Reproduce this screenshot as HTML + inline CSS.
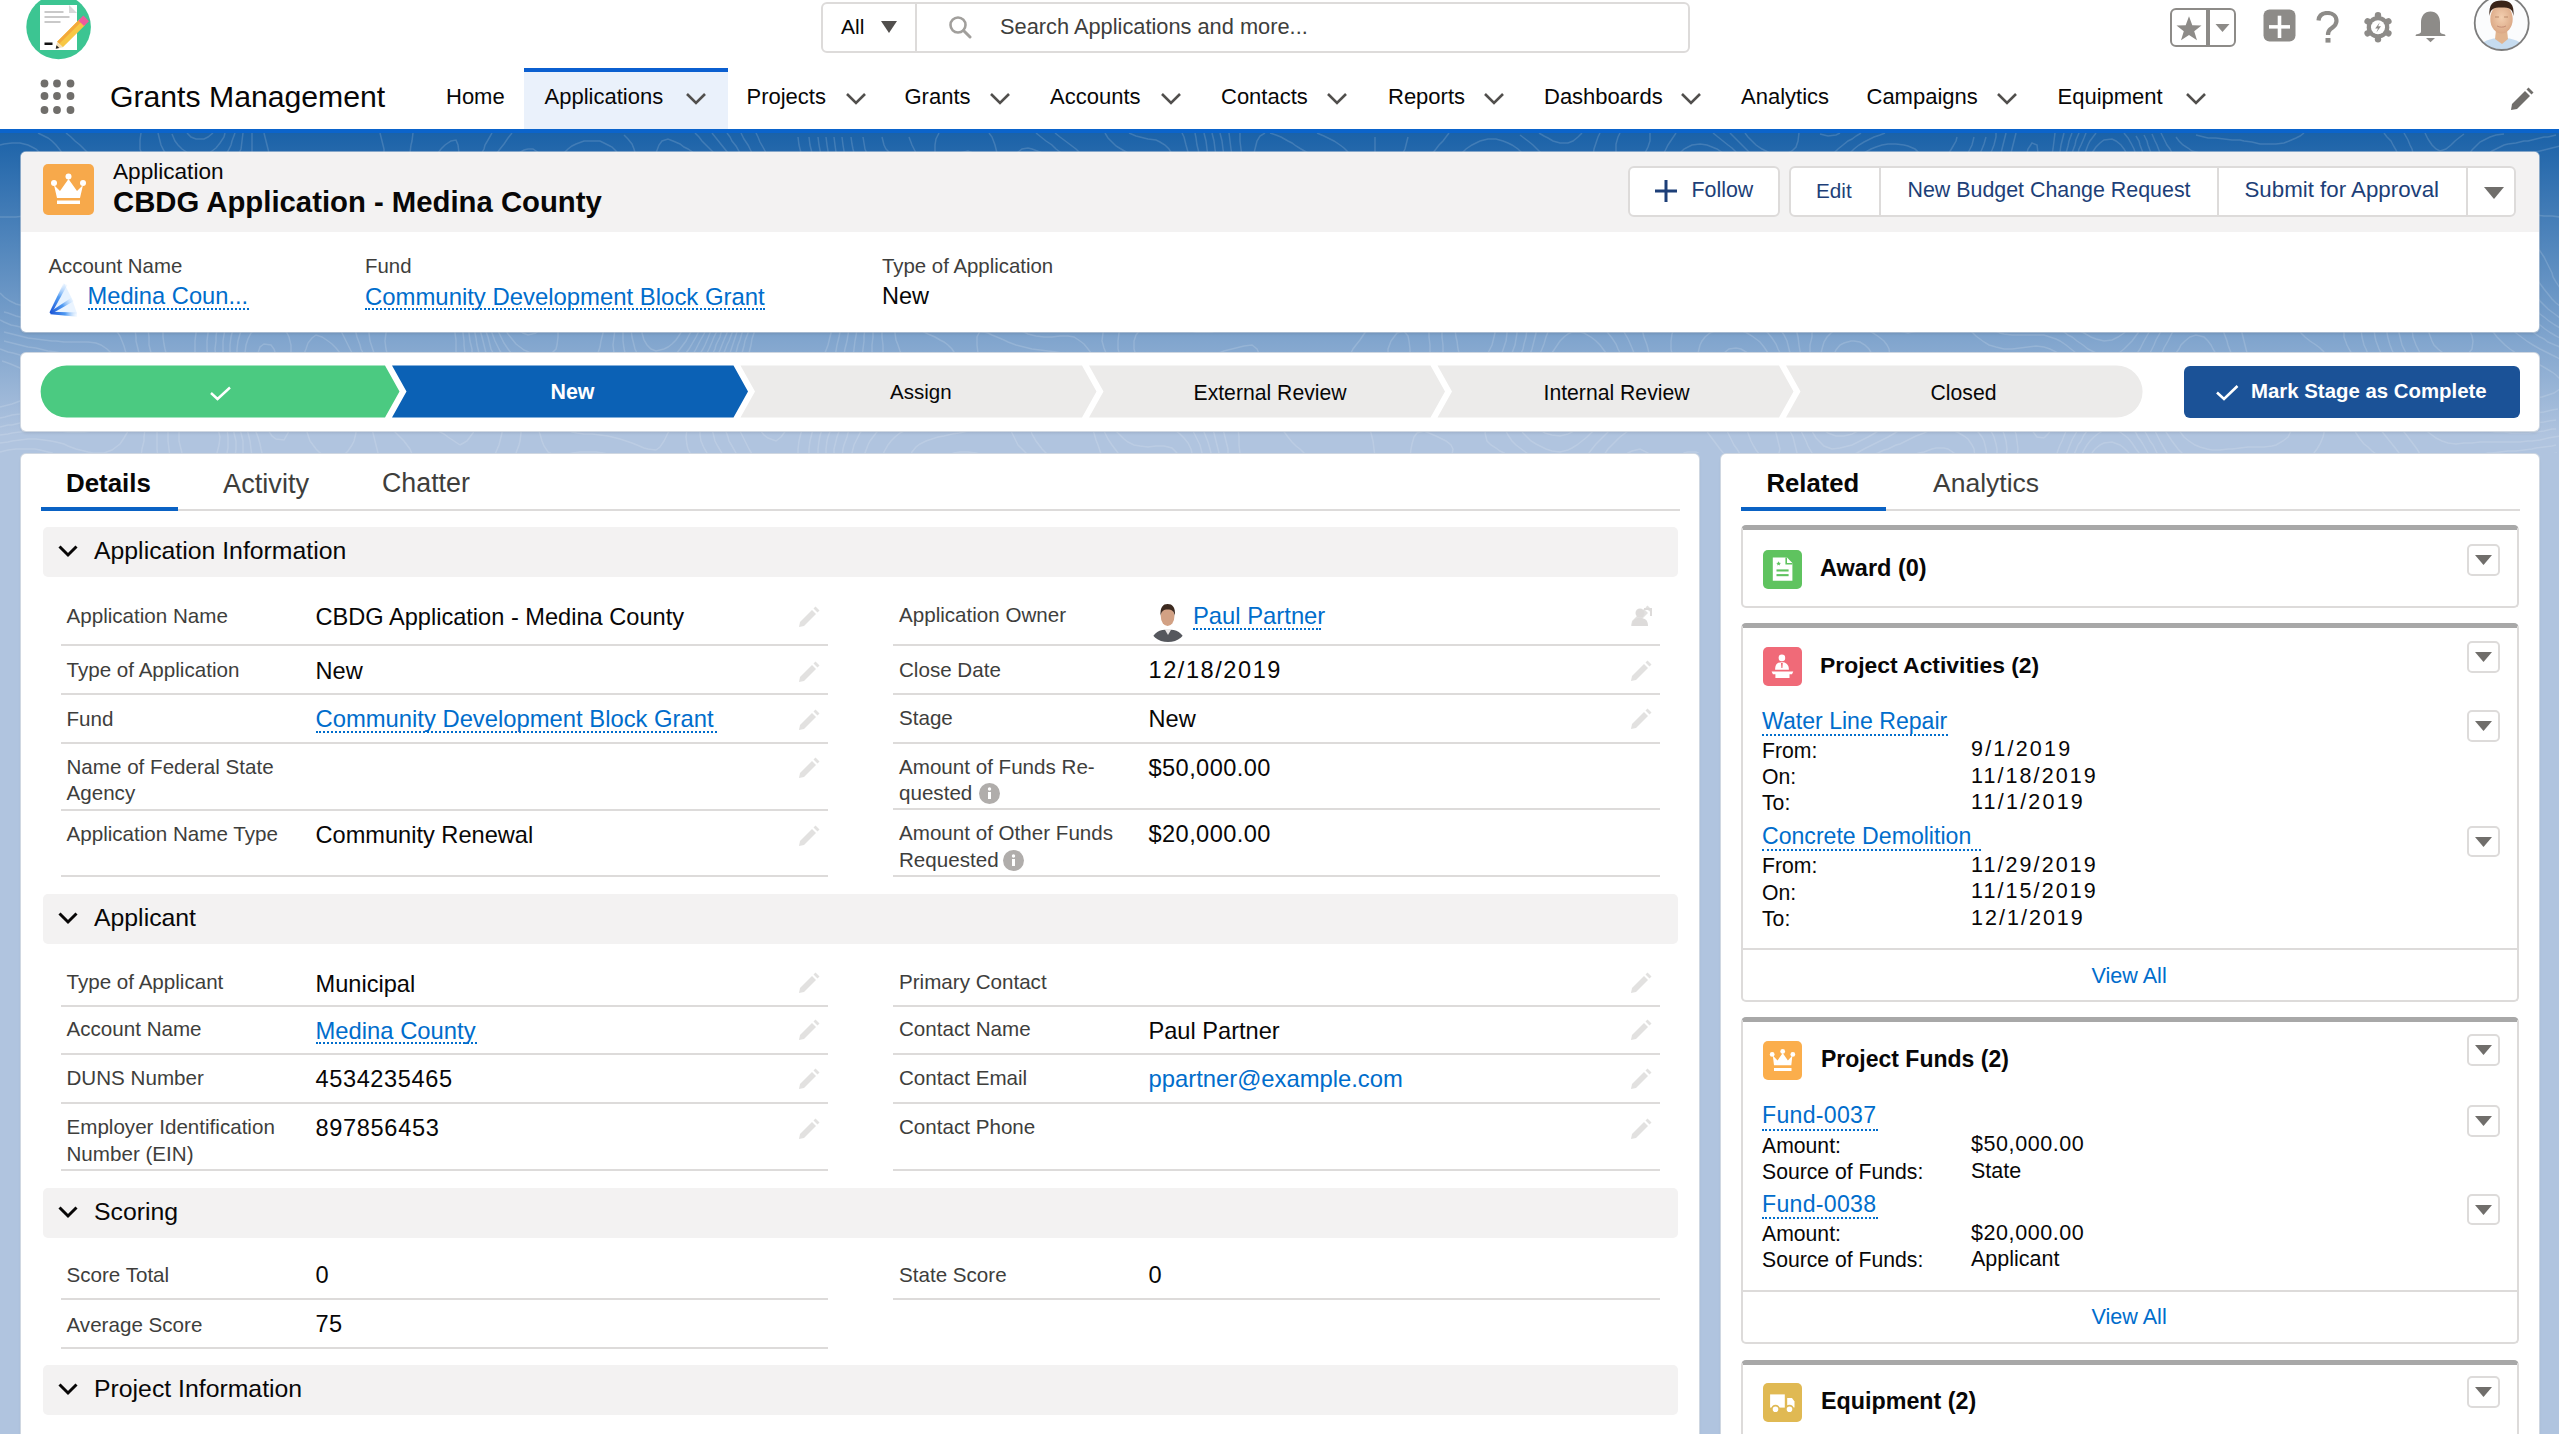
<!DOCTYPE html>
<html><head><meta charset="utf-8"><title>CBDG Application - Medina County</title>
<style>
html,body{margin:0;padding:0}
body{width:2559px;height:1434px;overflow:hidden;position:relative;background:#b0c4df;font-family:"Liberation Sans",sans-serif;}
.t{position:absolute;line-height:1;white-space:nowrap}
.r{position:absolute;display:block}
.lk{color:#006dcc}
.ul{position:absolute;height:0;border-bottom:2px dotted #006dcc}
</style></head><body>
<div class="r" style="left:0.0px;top:0.0px;width:2559.0px;height:128.5px;background:#fff"></div>
<div class="r" style="left:0.0px;top:128.5px;width:2559.0px;height:4.5px;background:#0b64cc"></div>
<div class="r" style="left:0.0px;top:133.0px;width:2559.0px;height:303.0px;background:linear-gradient(to bottom,#1b62a8 0%,#b0c4df 100%)"></div>
<svg class="r" style="left:0.0px;top:133.0px;" width="2559" height="320" viewBox="0 0 2559 320"><g fill="none" stroke="#fff" stroke-width="1.5" stroke-opacity="0.15"><polyline points="1881,104 1887,100 1890,96 1893,92 1896,84 1897,80 1898,72 1898,64 1897,56 1896,51 1892,44 1888,41 1880,40 1872,44 1868,48 1866,52 1864,56 1862,64 1861,72 1862,80 1863,88 1864,92 1868,99 1872,103 1876,104 1881,104"/><polyline points="2102,140 2108,137 2112,132 2114,128 2116,123 2118,116 2119,108 2120,101 2120,96 2120,88 2120,80 2120,73 2120,68 2118,60 2116,52 2115,48 2112,44 2104,42 2100,46 2097,52 2095,56 2092,63 2090,68 2088,75 2087,80 2084,88 2083,92 2082,100 2081,108 2081,116 2082,124 2084,129 2088,135 2092,138 2096,140 2102,140"/><polyline points="781,304 784,300 788,294 791,288 794,284 796,280 800,273 803,268 805,264 808,259 812,252 814,248 816,243 819,236 821,232 824,224 825,220 828,212 829,208 831,200 832,193 833,188 833,180 834,172 834,164 833,156 832,148 831,144 830,136 828,130 826,124 824,117 822,112 820,106 817,100 815,96 812,90 808,84 805,80 800,78 796,80 792,87 790,92 788,97 786,104 784,109 781,116 780,120 777,128 776,132 773,140 772,144 769,152 768,156 765,164 764,168 761,176 760,180 757,188 756,192 754,200 752,206 751,212 749,220 748,224 746,232 745,240 745,248 744,256 745,264 747,272 748,277 751,284 753,288 756,292 760,297 764,302 768,305 776,308 781,304"/><polyline points="442,252 447,248 450,244 452,240 455,232 456,224 456,220 456,212 456,207 455,200 453,192 452,188 448,180 446,176 441,172 436,170 428,170 423,172 416,175 412,177 407,180 400,184 396,187 392,191 388,196 386,200 385,208 386,216 388,224 390,228 392,232 396,239 400,243 404,247 408,250 412,252 420,255 428,256 436,255 442,252"/><polyline points="2457,224 2464,223 2469,220 2472,216 2473,208 2472,203 2469,196 2466,192 2463,188 2458,184 2452,180 2448,179 2440,179 2436,182 2432,186 2430,192 2429,200 2432,208 2434,212 2438,216 2443,220 2448,222 2456,224 2457,224"/><polyline points="756,0 758,4 760,9 764,16 766,20 768,25 771,32 773,36 776,44 777,48 779,56 780,64 780,68 780,76 780,82 779,88 778,96 776,104 775,108 773,116 772,121 770,128 768,134 766,140 764,147 763,152 760,160 759,164 756,172 755,176 752,184 751,188 749,196 748,200 745,208 744,213 742,220 740,228 739,232 737,240 736,248 735,252 734,260 734,268 734,276 736,284 737,288 739,296 741,300 744,306 747,312 749,316 752,321"/><polyline points="798,324 798,316 799,308 800,304 802,296 804,291 807,284 809,280 812,273 814,268 816,264 820,257 822,252 824,248 828,240 830,236 832,230 834,224 836,218 837,212 839,204 840,199 841,192 842,184 842,176 843,168 842,160 842,152 841,144 840,140 838,132 836,124 835,120 832,112 831,108 828,100 827,96 824,88 823,84 820,76 818,72 816,66 814,60 812,56 809,48 808,44 805,36 804,32 802,24 800,16 799,12 798,4"/><polyline points="2104,156 2112,152 2116,148 2118,144 2120,140 2124,132 2125,128 2126,120 2128,112 2128,106 2128,100 2129,92 2129,84 2128,76 2128,68 2128,64 2127,56 2126,48 2124,40 2123,36 2120,29 2116,24 2112,22 2104,22 2100,26 2096,31 2093,36 2092,40 2088,48 2087,52 2085,60 2083,64 2081,72 2080,76 2078,84 2076,90 2074,96 2073,104 2072,108 2071,116 2071,124 2072,131 2074,136 2076,141 2080,146 2084,150 2088,153 2095,156 2100,157 2104,156"/><polyline points="1882,120 1888,117 1892,114 1896,109 1899,104 1901,100 1904,92 1905,88 1907,80 1908,74 1909,68 1909,60 1909,52 1909,44 1908,40 1904,33 1900,29 1896,26 1888,24 1880,25 1872,28 1868,30 1864,34 1860,39 1857,44 1855,48 1853,56 1852,64 1852,68 1852,76 1852,80 1853,88 1855,96 1856,101 1859,108 1862,112 1865,116 1872,120 1876,121 1882,120"/><polyline points="1333,116 1336,109 1336,104 1336,100 1334,92 1332,87 1328,81 1324,76 1320,73 1316,70 1312,68 1304,65 1300,64 1296,64 1290,68 1288,72 1287,80 1288,88 1289,92 1292,100 1295,104 1299,108 1304,112 1308,114 1312,116 1320,118 1328,119 1333,116"/><polyline points="445,272 452,269 456,265 459,260 461,256 463,248 464,244 465,236 465,228 465,220 464,212 464,208 463,200 461,192 460,187 458,180 456,174 453,168 450,164 447,160 442,156 436,154 428,155 424,157 418,160 412,163 408,165 402,168 396,171 392,172 384,176 380,179 376,182 372,187 370,192 369,200 370,208 372,214 374,220 376,226 379,232 381,236 384,243 387,248 390,252 394,256 398,260 403,264 408,267 412,269 420,271 425,272 432,273 440,273 445,272"/><polyline points="2560,246 2556,242 2552,239 2547,236 2540,232 2536,230 2532,228 2524,224 2520,222 2516,220 2510,216 2505,212 2501,208 2497,204 2494,200 2490,196 2487,192 2483,188 2480,184 2476,180 2472,176 2468,172 2463,168 2456,164 2452,162 2446,160 2440,159 2435,160 2428,163 2424,166 2420,170 2416,176 2414,180 2412,188 2412,192 2412,196 2413,204 2416,212 2418,216 2420,220 2424,225 2428,229 2432,233 2437,236 2444,240 2448,241 2456,244 2460,245 2468,246 2476,248 2480,249 2488,252 2492,253 2498,256 2504,259 2508,261 2516,263 2520,264 2528,265 2536,265 2542,264 2548,262 2554,260 2560,256"/><polyline points="741,0 744,6 748,12 750,16 752,20 756,28 758,32 760,36 764,44 765,48 768,56 769,60 771,68 771,76 772,84 771,92 770,100 769,108 768,112 766,120 764,127 763,132 760,140 759,144 757,152 756,156 753,164 752,168 750,176 748,181 746,188 744,194 742,200 740,207 738,212 736,220 735,224 732,232 731,236 729,244 728,249 726,256 725,264 724,268 723,276 723,284 724,292 725,296 728,304 729,308 732,313 736,320 738,324"/><polyline points="809,324 809,316 810,308 812,300 813,296 815,288 817,284 820,277 822,272 824,268 828,261 831,256 833,252 836,245 838,240 840,235 842,228 844,222 845,216 847,208 848,202 849,196 850,188 850,180 851,172 851,164 850,156 850,148 849,140 848,136 846,128 844,120 843,116 840,108 839,104 836,96 835,92 832,84 831,80 828,72 827,68 824,60 823,56 820,48 819,44 816,36 815,32 813,24 812,20 810,12 809,4"/><polyline points="443,68 446,64 449,60 452,53 454,48 456,41 457,36 459,28 459,20 458,12 456,7 451,8 445,12 441,16 438,20 435,24 432,28 429,36 428,40 427,48 427,56 428,60 432,67 436,70 443,68"/><polyline points="2109,168 2116,164 2120,160 2123,156 2125,152 2128,146 2130,140 2132,133 2133,128 2134,120 2135,112 2136,104 2136,96 2136,88 2136,80 2136,72 2135,64 2135,56 2134,48 2133,40 2132,36 2130,28 2128,23 2124,16 2121,12 2116,8 2112,6 2104,7 2100,10 2096,14 2092,20 2090,24 2088,29 2086,36 2084,40 2082,48 2080,54 2078,60 2076,67 2075,72 2072,80 2071,84 2068,92 2067,96 2064,104 2063,108 2061,116 2060,124 2060,132 2062,140 2064,144 2068,150 2072,155 2076,159 2080,162 2084,165 2090,168 2096,170 2104,170 2109,168"/><polyline points="1884,132 1892,128 1896,125 1900,121 1903,116 1906,112 1908,107 1911,100 1912,95 1914,88 1916,80 1916,76 1918,68 1919,60 1920,53 1921,48 1921,40 1922,32 1920,24 1919,20 1915,16 1908,13 1904,12 1896,11 1888,11 1882,12 1876,14 1871,16 1864,20 1860,23 1856,27 1852,32 1850,36 1848,41 1846,48 1844,56 1844,63 1844,68 1844,74 1844,80 1845,88 1846,96 1848,104 1849,108 1852,115 1855,120 1858,124 1862,128 1868,131 1872,132 1880,133 1884,132"/><polyline points="1345,140 1349,136 1352,130 1353,124 1354,116 1353,108 1352,100 1351,96 1349,88 1348,84 1345,76 1343,72 1340,67 1336,61 1332,57 1328,53 1324,50 1320,47 1314,44 1308,41 1304,39 1298,36 1292,34 1286,32 1280,32 1276,33 1272,37 1269,44 1268,50 1268,56 1268,64 1268,68 1269,76 1270,84 1271,92 1272,97 1274,104 1276,111 1278,116 1280,120 1284,125 1288,128 1294,132 1300,134 1304,136 1312,139 1316,140 1324,142 1332,144 1340,143 1345,140"/><polyline points="1473,120 1477,116 1480,110 1483,104 1484,100 1487,92 1488,88 1489,80 1489,72 1487,68 1480,66 1476,69 1472,74 1469,80 1467,84 1466,92 1466,100 1466,108 1468,116 1471,120 1473,120"/><polyline points="460,312 467,308 470,304 473,300 476,292 477,288 477,280 477,272 477,264 476,256 476,252 475,244 474,236 473,228 472,220 472,216 470,208 469,200 468,194 467,188 465,180 464,176 461,168 460,164 456,156 454,152 452,148 448,143 444,139 436,136 428,139 424,141 420,144 414,148 408,152 404,154 399,156 392,158 386,160 380,162 372,164 368,166 364,168 360,172 356,178 354,184 354,192 356,200 357,204 360,212 361,216 364,222 366,228 368,232 372,240 374,244 376,249 380,256 382,260 385,264 388,269 392,273 396,277 400,280 407,284 412,286 416,288 424,291 428,293 435,296 440,299 444,301 448,304 454,308 460,312 460,312"/><polyline points="2560,226 2556,224 2548,220 2544,218 2540,216 2533,212 2528,209 2524,206 2520,203 2516,200 2511,196 2506,192 2501,188 2497,184 2493,180 2489,176 2485,172 2480,168 2476,164 2472,161 2468,158 2464,155 2460,152 2453,148 2448,146 2440,144 2432,145 2424,148 2420,150 2416,154 2412,157 2408,162 2405,168 2403,172 2400,180 2399,184 2399,192 2399,200 2400,204 2402,212 2404,216 2408,224 2411,228 2414,232 2417,236 2421,240 2426,244 2431,248 2436,251 2440,253 2446,256 2452,258 2457,260 2464,262 2468,264 2476,267 2480,268 2488,271 2492,273 2500,276 2504,277 2512,279 2520,280 2524,280 2530,280 2536,280 2544,279 2552,277 2558,276"/><polyline points="269,244 273,240 276,232 276,228 276,222 274,216 271,212 264,211 260,214 258,220 258,228 260,236 262,240 267,244 269,244"/><polyline points="0,274 8,272 12,271 20,268 24,266 28,264 34,260 38,256 38,248 35,244 30,240 24,237 20,235 13,232 8,230 2,228"/><polyline points="413,0 412,8 411,12 410,20 408,28 408,32 408,40 408,48 408,52 410,60 412,68 413,72 415,80 417,84 420,92 421,96 423,104 423,112 420,120 418,124 415,128 412,132 408,136 402,140 396,143 392,144 384,146 376,148 372,148 364,150 357,152 352,155 348,158 344,162 340,168 338,172 337,180 337,188 340,196 342,200 344,204 348,212 350,216 352,220 356,227 359,232 360,236 364,244 366,248 368,253 371,260 373,264 376,271 378,276 381,280 384,286 388,292 392,296 396,300 400,304 404,308 407,312 410,316 412,321"/><polyline points="494,324 496,319 499,312 500,308 502,300 502,292 501,284 500,280 497,272 495,268 492,262 490,256 488,252 485,244 484,240 482,232 480,225 479,220 477,212 476,205 475,200 473,192 472,185 471,180 469,172 468,168 465,160 464,156 461,148 459,144 456,136 455,132 452,124 451,120 449,112 449,104 451,96 452,92 454,84 456,80 459,72 461,68 464,60 466,56 468,50 471,44 472,40 476,32 478,28 480,23 484,16 485,12 488,7 492,0"/><polyline points="727,0 730,4 732,8 736,13 740,20 743,24 745,28 748,33 752,40 754,44 756,48 759,56 760,60 763,68 764,76 764,80 765,88 764,96 764,100 763,108 761,116 760,121 758,128 756,136 755,140 753,148 752,152 749,160 748,165 746,172 744,178 742,184 740,190 738,196 736,202 734,208 732,214 730,220 728,226 726,232 724,238 722,244 720,250 718,256 716,263 715,268 713,276 712,282 712,288 712,296 713,300 715,308 717,312 720,317 724,324"/><polyline points="818,324 818,316 819,308 820,303 822,296 824,290 826,284 828,280 832,273 834,268 837,264 840,257 843,252 845,248 848,240 849,236 852,228 853,224 854,216 855,208 856,203 857,196 857,188 858,180 858,172 859,164 859,156 858,148 858,140 856,132 855,128 853,120 852,115 850,108 848,104 845,96 844,92 841,84 840,80 837,72 836,68 833,60 831,56 829,48 827,44 825,36 824,32 821,24 820,17 819,12 818,4"/><polyline points="1265,0 1260,3 1257,8 1256,12 1254,20 1254,28 1254,36 1254,44 1255,52 1256,60 1257,64 1258,72 1259,80 1260,88 1261,92 1262,100 1263,108 1264,113 1266,120 1268,128 1269,132 1272,139 1276,144 1280,148 1284,150 1291,152 1296,153 1304,155 1309,156 1316,158 1323,160 1328,161 1336,163 1344,163 1350,160 1356,156 1359,152 1361,148 1364,141 1365,136 1366,128 1365,120 1365,112 1364,108 1363,100 1361,92 1360,88 1358,80 1356,74 1354,68 1352,62 1350,56 1348,52 1344,46 1340,41 1336,37 1332,34 1328,31 1323,28 1316,24 1312,22 1308,20 1301,16 1296,13 1292,10 1288,8 1281,4 1276,2 1270,0"/><polyline points="1885,0 1880,2 1874,4 1868,7 1864,9 1859,12 1854,16 1850,20 1846,24 1843,28 1840,35 1838,40 1837,48 1836,56 1836,64 1837,72 1837,80 1838,88 1839,96 1840,103 1841,108 1843,116 1845,120 1848,126 1852,132 1856,136 1860,138 1864,140 1872,143 1880,143 1888,142 1892,140 1898,136 1903,132 1906,128 1909,124 1912,118 1915,112 1916,108 1919,100 1920,96 1922,88 1924,80 1925,76 1927,68 1928,63 1930,56 1932,49 1934,44 1936,39 1940,32 1943,28 1946,24 1949,20 1952,15 1956,8 1957,4"/><polyline points="2096,0 2093,4 2090,8 2088,12 2085,20 2083,24 2080,32 2079,36 2077,44 2076,48 2074,56 2072,61 2070,68 2068,74 2066,80 2064,85 2061,92 2059,96 2056,104 2054,108 2052,112 2048,120 2047,124 2044,132 2045,140 2048,146 2052,151 2056,155 2060,159 2064,163 2068,166 2072,169 2076,172 2082,176 2088,179 2092,181 2100,182 2108,182 2112,180 2118,176 2123,172 2126,168 2129,164 2132,158 2135,152 2136,148 2139,140 2140,134 2141,128 2142,120 2143,112 2143,104 2143,96 2143,88 2143,80 2143,72 2142,64 2142,56 2141,48 2140,40 2140,36 2138,28 2136,22 2134,16 2132,12 2128,5 2124,0"/><polyline points="594,92 598,88 601,84 604,80 608,72 609,68 611,60 611,52 611,44 608,37 605,32 600,28 596,27 588,26 583,28 578,32 575,36 572,42 571,48 570,56 571,64 572,71 573,76 576,83 579,88 582,92 588,95 594,92"/><polyline points="1476,232 1482,228 1485,224 1488,220 1492,212 1493,208 1495,200 1495,192 1495,184 1494,176 1493,168 1492,162 1491,156 1491,148 1491,140 1492,132 1492,128 1494,120 1496,112 1497,108 1499,100 1500,96 1503,88 1504,84 1506,76 1507,68 1508,60 1506,52 1504,47 1500,43 1494,40 1488,40 1484,41 1477,44 1472,47 1468,51 1464,56 1461,60 1459,64 1456,72 1455,76 1453,84 1452,90 1451,96 1451,104 1450,112 1450,120 1450,128 1450,136 1451,144 1451,152 1452,160 1452,164 1453,172 1454,180 1454,188 1455,196 1456,204 1457,208 1458,216 1460,223 1463,228 1467,232 1472,233 1476,232"/><polyline points="2560,214 2555,212 2548,209 2544,206 2540,204 2534,200 2529,196 2524,192 2520,189 2516,185 2512,182 2508,179 2504,175 2500,172 2496,168 2491,164 2486,160 2482,156 2477,152 2472,148 2468,145 2464,141 2460,139 2456,136 2449,132 2444,130 2436,129 2428,131 2424,133 2418,136 2413,140 2408,144 2404,148 2401,152 2398,156 2395,160 2392,166 2390,172 2388,177 2387,184 2386,192 2387,200 2388,205 2390,212 2392,217 2395,224 2397,228 2400,232 2404,238 2408,243 2412,248 2416,252 2420,255 2424,258 2428,261 2433,264 2440,268 2444,270 2448,272 2456,275 2460,277 2468,279 2472,281 2480,283 2484,284 2492,287 2498,288 2504,289 2512,290 2520,291 2528,291 2536,290 2544,289 2549,288 2556,287"/><polyline points="277,272 280,268 284,260 285,256 287,248 288,243 289,236 290,228 291,220 291,212 289,204 287,200 284,196 279,192 272,190 264,191 260,192 255,196 251,200 248,206 246,212 245,220 246,228 247,236 248,240 251,248 253,252 256,258 260,264 263,268 268,272 272,274 277,272"/><polyline points="0,285 5,284 12,282 20,281 24,280 32,278 38,276 44,274 52,272 56,271 63,268 68,265 72,262 76,257 77,252 76,247 72,242 68,239 63,236 56,233 52,232 44,229 40,227 32,225 28,224 20,222 13,220 8,219 0,216"/><polyline points="1778,324 1780,316 1778,308 1776,300 1775,296 1772,289 1770,284 1768,276 1767,272 1765,264 1764,256 1763,252 1762,244 1760,238 1757,232 1755,228 1752,224 1748,220 1741,216 1736,215 1729,216 1724,220 1722,224 1721,232 1722,240 1724,247 1726,252 1728,256 1732,264 1734,268 1737,272 1740,279 1742,284 1744,289 1747,296 1748,300 1751,308 1753,312 1756,317 1760,322"/><polyline points="1957,324 1954,320 1948,316 1944,315 1936,315 1932,316 1924,319 1919,320 1912,322 1904,324"/><polyline points="380,0 382,8 384,16 384,20 386,28 388,36 389,40 390,48 392,53 394,60 396,67 398,72 400,80 401,84 403,92 404,97 405,104 404,110 402,116 400,120 396,124 390,128 384,130 376,131 370,132 364,132 356,133 348,136 344,138 340,140 336,144 332,148 328,153 324,159 320,164 318,168 315,172 312,176 304,180 296,179 288,177 280,176 272,176 264,178 258,180 252,184 248,187 244,192 242,196 240,201 238,208 237,216 237,224 238,232 240,240 241,244 244,251 246,256 248,261 252,268 254,272 256,277 260,284 262,288 265,292 268,297 272,303 276,306 284,307 288,300 289,296 290,288 292,280 292,276 294,268 295,260 296,254 297,248 299,240 300,235 302,228 304,221 306,216 308,210 312,205 316,202 322,204 328,208 332,211 336,215 340,220 343,224 346,228 348,232 352,238 355,244 357,248 360,256 361,260 364,268 365,272 368,280 369,284 371,292 372,296 374,304 376,312 377,316 379,324"/><polyline points="514,324 516,320 519,312 520,308 521,300 520,292 519,288 517,280 515,276 512,270 508,264 506,260 503,256 500,251 496,245 494,240 492,236 488,228 487,224 485,216 484,212 482,204 480,197 479,192 477,184 476,179 474,172 472,164 471,160 469,152 468,148 465,140 464,135 462,128 461,120 460,112 461,104 462,96 463,88 465,84 467,76 469,72 472,64 474,60 476,56 480,48 482,44 484,40 488,34 492,28 494,24 497,20 500,16 504,11 508,5 512,0"/><polyline points="712,0 716,5 720,10 724,15 728,20 731,24 734,28 737,32 740,36 744,43 747,48 749,52 752,59 754,64 756,71 757,76 758,84 758,92 758,100 757,108 756,114 755,120 753,128 752,133 750,140 748,148 747,152 745,160 743,164 741,172 740,176 737,184 736,188 733,196 732,200 729,208 727,212 724,220 723,224 720,232 718,236 716,242 714,248 712,252 709,260 707,264 704,272 703,276 701,284 700,290 700,296 700,302 701,308 704,315 707,320 709,324"/><polyline points="826,324 826,316 827,308 828,304 831,296 832,292 836,284 838,280 840,276 844,269 847,264 849,260 852,255 855,248 857,244 859,236 860,232 862,224 863,216 864,208 864,203 865,196 865,188 866,180 866,172 867,164 867,156 868,148 867,140 867,132 865,124 864,119 862,112 860,107 857,100 855,96 852,88 850,84 848,78 846,72 844,68 841,60 840,56 837,48 835,44 833,36 832,32 829,24 828,18 827,12 826,4"/><polyline points="1240,0 1240,8 1241,16 1242,24 1243,32 1244,40 1244,44 1246,52 1247,60 1248,64 1249,72 1251,80 1252,88 1252,92 1254,100 1254,108 1255,116 1256,123 1257,128 1258,136 1259,144 1260,152 1260,156 1262,164 1264,172 1265,176 1268,180 1276,181 1281,180 1288,178 1296,176 1300,176 1304,176 1312,177 1320,179 1324,181 1332,183 1340,184 1348,183 1354,180 1360,176 1364,172 1367,168 1370,164 1372,159 1375,152 1376,146 1377,140 1377,132 1376,124 1376,120 1374,112 1373,104 1372,100 1370,92 1368,84 1367,80 1366,72 1364,64 1363,60 1362,52 1360,46 1358,40 1356,33 1354,28 1352,24 1348,19 1344,15 1340,12 1334,8 1328,5 1324,3 1317,0"/><polyline points="1745,0 1748,4 1752,8 1756,12 1762,16 1768,19 1772,21 1780,22 1788,20 1792,18 1796,14 1798,8 1799,0"/><polyline points="1861,0 1856,3 1852,6 1848,8 1843,12 1838,16 1834,20 1831,24 1828,32 1827,36 1827,44 1827,52 1828,59 1829,64 1829,72 1830,80 1831,88 1832,96 1832,100 1834,108 1835,116 1836,120 1839,128 1841,132 1844,137 1848,141 1852,144 1859,148 1864,150 1872,152 1876,152 1884,152 1888,152 1896,149 1900,146 1904,144 1908,140 1912,135 1916,129 1919,124 1921,120 1924,112 1925,108 1928,100 1929,96 1931,88 1932,83 1934,76 1936,69 1938,64 1940,59 1943,52 1946,48 1949,44 1952,40 1956,35 1960,31 1964,26 1968,20 1970,16 1972,12 1974,4"/><polyline points="2086,0 2084,5 2081,12 2079,16 2077,24 2076,28 2074,36 2072,42 2070,48 2068,56 2067,60 2064,68 2063,72 2060,78 2057,84 2055,88 2052,94 2048,100 2045,104 2041,108 2037,112 2032,115 2028,117 2022,120 2016,123 2012,126 2008,130 2005,136 2005,144 2008,151 2012,156 2016,158 2021,160 2028,162 2036,163 2040,164 2048,167 2052,169 2057,172 2064,176 2068,179 2072,181 2076,184 2083,188 2088,191 2092,192 2100,195 2108,194 2114,192 2120,189 2124,185 2128,181 2132,176 2134,172 2136,168 2140,161 2142,156 2144,151 2146,144 2148,137 2149,132 2150,124 2151,116 2151,108 2151,100 2151,92 2151,84 2151,76 2150,68 2150,60 2149,52 2148,44 2148,40 2146,32 2144,24 2143,20 2140,12 2139,8 2136,3"/><polyline points="590,116 596,112 599,108 602,104 605,100 608,96 612,88 614,84 616,80 619,72 621,68 623,60 624,53 624,48 624,40 624,36 622,28 620,24 616,18 612,14 608,12 600,8 596,8 588,8 584,8 576,11 572,13 568,16 564,20 560,28 559,32 558,40 559,48 559,56 560,61 561,68 563,76 564,80 567,88 568,92 571,100 573,104 576,109 580,114 584,116 590,116"/><polyline points="1473,256 1480,252 1484,248 1488,244 1491,240 1493,236 1496,232 1500,225 1502,220 1504,214 1506,208 1507,200 1507,192 1507,184 1506,176 1504,168 1504,164 1503,156 1502,148 1502,140 1502,132 1503,124 1504,120 1506,112 1508,105 1510,100 1512,93 1514,88 1516,81 1518,76 1520,68 1521,64 1521,56 1521,48 1520,44 1517,36 1514,32 1510,28 1504,24 1500,23 1492,22 1484,24 1480,25 1475,28 1469,32 1465,36 1461,40 1457,44 1455,48 1452,52 1449,60 1447,64 1445,72 1444,77 1443,84 1442,92 1441,100 1440,108 1440,112 1439,120 1438,128 1438,136 1438,144 1438,152 1439,160 1439,168 1440,175 1440,180 1441,188 1442,196 1442,204 1443,212 1443,220 1444,225 1445,232 1447,240 1449,244 1452,250 1456,254 1460,257 1468,258 1473,256"/><polyline points="2560,205 2556,203 2551,200 2545,196 2540,192 2536,189 2532,186 2528,183 2524,179 2520,175 2516,172 2512,168 2507,164 2502,160 2497,156 2492,152 2488,148 2484,145 2480,142 2476,138 2472,135 2468,131 2464,128 2459,124 2454,120 2448,117 2444,115 2436,114 2428,116 2424,118 2420,120 2414,124 2410,128 2405,132 2401,136 2397,140 2394,144 2391,148 2388,152 2384,158 2381,164 2379,168 2376,176 2375,180 2374,188 2374,196 2375,204 2376,208 2379,216 2381,220 2384,227 2387,232 2389,236 2392,241 2396,246 2400,252 2404,256 2407,260 2411,264 2416,268 2420,272 2424,275 2428,278 2432,280 2438,284 2444,287 2448,289 2456,292 2460,293 2468,294 2476,296 2480,297 2488,298 2496,299 2504,299 2512,300 2516,300 2520,300 2528,300 2536,299 2544,298 2552,296 2556,296"/><polyline points="1798,324 1796,316 1795,312 1793,304 1791,300 1788,292 1787,288 1784,280 1783,276 1781,268 1780,263 1778,256 1777,248 1776,244 1774,236 1772,230 1770,224 1768,220 1764,214 1760,209 1756,206 1752,203 1747,200 1740,197 1735,196 1728,195 1722,196 1716,197 1710,200 1705,204 1702,208 1700,212 1698,220 1698,228 1700,236 1701,240 1704,248 1705,252 1708,258 1711,264 1713,268 1716,275 1718,280 1720,284 1724,292 1726,296 1728,300 1732,308 1734,312 1737,316 1740,321"/><polyline points="0,294 8,292 12,292 20,290 28,289 32,288 40,287 48,286 56,285 64,285 71,284 76,283 84,281 88,279 93,276 97,272 100,268 103,260 104,254 104,250 103,244 100,236 97,232 92,228 88,226 83,224 76,223 68,221 61,220 56,219 48,218 40,216 36,215 28,214 20,212 16,211 8,209 4,208"/><polyline points="1310,324 1304,320 1300,316 1296,313 1292,309 1288,304 1285,300 1282,296 1279,292 1276,286 1273,280 1271,276 1269,268 1268,264 1266,256 1265,248 1264,244 1263,236 1261,228 1260,223 1257,216 1252,212 1244,213 1236,215 1232,216 1224,218 1219,220 1212,223 1208,225 1206,232 1208,236 1212,242 1216,248 1219,252 1221,256 1224,260 1228,268 1230,272 1232,276 1235,284 1236,289 1238,296 1239,304 1239,312 1240,320"/><polyline points="1975,324 1974,316 1972,312 1968,306 1964,303 1959,300 1952,297 1944,296 1936,297 1928,298 1924,300 1916,303 1912,305 1906,308 1900,311 1896,312 1888,316 1884,317 1878,320 1872,322"/><polyline points="2132,324 2128,319 2124,315 2120,312 2112,309 2104,310 2100,312 2095,316 2092,320"/><polyline points="264,0 266,8 268,16 269,20 272,27 275,32 278,36 281,40 285,44 289,48 293,52 297,56 301,60 305,64 309,68 313,72 317,76 322,80 328,84 332,86 340,84 343,80 347,76 351,72 356,68 360,66 368,68 372,71 376,76 378,80 380,86 381,92 380,99 376,104 372,106 364,106 356,105 352,104 344,102 337,104 334,108 331,112 328,118 325,124 322,128 320,132 316,139 312,144 309,148 305,152 300,156 296,158 291,160 284,162 276,163 272,164 264,166 260,168 252,172 248,175 244,178 240,183 237,188 235,192 232,200 231,204 230,212 230,220 231,228 232,235 233,240 236,248 237,252 240,259 242,264 244,268 247,276 249,280 252,288 254,292 256,299 258,304 260,311 261,316 263,324"/><polyline points="615,324 608,321 603,320 596,319 588,319 580,319 573,320 568,321 560,321 552,321 548,319 544,313 542,308 540,301 538,296 536,289 534,284 532,279 529,272 526,268 524,264 520,259 516,254 512,250 508,245 504,240 502,236 499,232 496,227 493,220 491,216 489,208 488,204 485,196 484,191 482,184 480,176 479,172 477,164 476,158 474,152 472,144 472,140 470,132 469,124 468,117 468,112 468,107 469,100 470,92 472,85 474,80 476,74 479,68 481,64 484,58 488,52 490,48 493,44 496,40 500,36 504,32 508,28 513,24 519,20 524,17 528,16 533,16 539,20 541,24 544,32 545,36 547,44 548,48 550,56 552,64 553,68 555,76 556,80 559,88 560,93 562,100 564,105 566,112 568,116 571,124 573,128 576,132 580,137 588,138 592,136 596,132 600,127 604,121 607,116 609,112 612,107 616,100 618,96 620,92 624,84 626,80 628,76 631,68 632,64 635,56 636,49 637,44 637,36 637,28 636,23 634,16 632,11 628,6 624,2"/><polyline points="695,0 699,4 702,8 706,12 710,16 714,20 718,24 722,28 726,32 729,36 732,40 736,45 740,52 743,56 745,60 748,68 749,72 751,80 752,88 752,92 752,100 752,104 751,112 750,120 748,128 747,132 745,140 744,145 742,152 740,159 739,164 736,172 735,176 732,184 731,188 728,196 727,200 724,207 722,212 720,217 717,224 715,228 712,236 710,240 708,245 704,252 703,256 700,261 697,268 695,272 692,279 690,284 688,290 687,296 686,304 687,312 688,316 692,324"/><polyline points="834,324 834,316 836,308 837,304 840,296 842,292 844,288 848,281 851,276 854,272 856,268 860,262 863,256 865,252 868,244 869,240 871,232 872,224 872,218 872,212 873,204 873,196 873,188 874,180 875,172 876,164 876,160 877,152 878,144 879,136 880,128 879,120 877,112 876,108 872,101 869,96 867,92 864,88 860,81 858,76 856,72 852,65 850,60 848,55 845,48 844,44 841,36 839,32 837,24 836,19 835,12 834,4"/><polyline points="1229,0 1230,8 1231,16 1232,22 1233,28 1234,36 1236,44 1237,48 1239,56 1240,63 1241,68 1243,76 1244,83 1245,88 1246,96 1247,104 1247,112 1248,120 1248,124 1248,132 1248,140 1248,145 1248,152 1246,160 1245,168 1243,172 1240,179 1237,184 1233,188 1228,192 1224,195 1220,196 1212,199 1204,199 1196,199 1188,197 1183,196 1176,194 1168,192 1164,191 1156,191 1148,192 1144,194 1140,197 1136,202 1134,208 1134,216 1136,223 1139,228 1143,232 1148,236 1152,238 1160,240 1164,241 1172,242 1177,244 1184,246 1188,248 1194,252 1199,256 1203,260 1206,264 1210,268 1212,272 1216,279 1219,284 1220,288 1223,296 1224,300 1226,308 1228,316 1228,320"/><polyline points="1375,324 1374,316 1373,308 1372,304 1370,296 1368,290 1366,284 1364,278 1362,272 1360,267 1357,260 1355,256 1352,248 1351,244 1349,236 1349,228 1351,220 1353,216 1356,212 1360,207 1364,201 1368,196 1371,192 1374,188 1376,184 1380,178 1383,172 1385,168 1388,160 1389,156 1390,148 1390,140 1389,132 1388,126 1387,120 1384,112 1383,108 1381,100 1380,95 1379,88 1377,80 1376,73 1375,68 1375,60 1374,52 1374,44 1374,36 1374,28 1375,20 1375,12 1375,4"/><polyline points="1620,0 1618,4 1616,11 1616,16 1616,20 1620,27 1624,30 1632,31 1638,28 1642,24 1645,20 1648,14 1650,8 1650,0"/><polyline points="1730,0 1734,4 1738,8 1742,12 1746,16 1750,20 1755,24 1760,27 1764,30 1769,32 1776,35 1784,36 1788,36 1796,37 1804,38 1808,40 1812,45 1816,52 1817,56 1820,64 1821,68 1822,76 1823,84 1824,89 1825,96 1826,104 1827,112 1828,120 1829,124 1831,132 1833,136 1836,142 1840,146 1844,150 1848,152 1855,156 1860,158 1868,160 1872,160 1880,161 1888,161 1893,160 1900,158 1904,156 1909,152 1913,148 1917,144 1920,140 1924,134 1928,128 1929,124 1932,118 1934,112 1936,106 1938,100 1940,92 1941,88 1943,80 1945,76 1948,68 1950,64 1953,60 1956,55 1960,50 1964,45 1968,40 1971,36 1974,32 1976,28 1980,21 1982,16 1984,11 1986,4"/><polyline points="1840,0 1836,2 1828,3 1820,1"/><polyline points="2079,0 2076,7 2075,12 2072,20 2071,24 2069,32 2068,37 2066,44 2064,51 2063,56 2060,63 2058,68 2056,73 2052,80 2049,84 2046,88 2043,92 2038,96 2032,100 2028,102 2020,104 2016,105 2008,107 2004,109 1998,112 1994,116 1991,120 1988,126 1987,132 1986,140 1987,148 1989,152 1992,159 1995,164 1999,168 2004,172 2008,174 2014,176 2020,177 2028,178 2036,178 2044,179 2048,180 2056,184 2060,186 2064,188 2071,192 2076,195 2080,198 2084,200 2091,204 2096,206 2104,208 2112,207 2118,204 2124,200 2128,196 2131,192 2134,188 2137,184 2140,179 2144,172 2146,168 2148,163 2151,156 2153,152 2156,144 2157,140 2159,132 2160,128 2162,120 2163,112 2163,104 2163,96 2162,88 2161,80 2160,72 2160,68 2159,60 2158,52 2157,44 2156,40 2154,32 2152,24 2151,20 2148,12 2147,8 2144,2"/><polyline points="1474,276 1479,272 1483,268 1487,264 1490,260 1492,256 1496,251 1500,244 1502,240 1505,236 1508,230 1511,224 1512,220 1515,212 1516,206 1517,200 1517,192 1517,184 1516,178 1515,172 1514,164 1512,156 1512,152 1511,144 1511,136 1512,128 1513,124 1514,116 1516,111 1518,104 1520,100 1523,92 1525,88 1528,80 1530,76 1532,68 1533,64 1534,56 1534,48 1533,40 1532,35 1529,28 1526,24 1522,20 1518,16 1512,12 1508,10 1503,8 1496,6 1488,6 1480,8 1476,10 1472,12 1466,16 1462,20 1457,24 1454,28 1450,32 1447,36 1444,41 1441,48 1439,52 1437,60 1436,64 1435,72 1433,80 1432,88 1432,92 1431,100 1430,108 1428,116 1428,120 1426,128 1425,136 1424,144 1424,152 1424,160 1425,168 1426,176 1427,184 1428,188 1429,196 1429,204 1430,212 1430,220 1430,228 1431,236 1432,244 1432,248 1434,256 1436,260 1440,267 1444,272 1448,275 1452,277 1460,279 1468,279 1474,276"/><polyline points="150,116 156,112 160,108 162,104 164,100 164,94 160,88 156,86 148,86 142,88 138,92 135,96 133,104 135,112 138,116 144,118 150,116"/><polyline points="2560,195 2555,192 2549,188 2544,184 2540,181 2536,177 2532,173 2528,169 2524,165 2520,162 2516,158 2512,154 2508,151 2504,148 2499,144 2494,140 2489,136 2484,132 2480,128 2476,125 2472,121 2468,117 2464,113 2460,109 2456,105 2452,101 2448,99 2441,96 2436,96 2432,97 2426,100 2420,104 2416,108 2412,111 2408,115 2404,119 2400,123 2396,127 2392,131 2388,136 2384,140 2381,144 2378,148 2375,152 2372,157 2368,164 2367,168 2364,175 2362,180 2361,188 2361,196 2362,204 2364,212 2366,216 2368,221 2371,228 2374,232 2376,236 2380,243 2383,248 2385,252 2388,256 2392,261 2396,267 2400,271 2404,276 2408,280 2412,284 2416,288 2420,292 2424,295 2428,299 2432,302 2436,305 2442,308 2448,310 2456,311 2464,310 2472,310 2480,309 2488,309 2496,309 2504,309 2512,309 2520,309 2528,308 2532,308 2540,307 2548,305 2554,304 2560,303"/><polyline points="1815,324 1812,320 1808,313 1806,308 1804,304 1800,296 1799,292 1796,284 1795,280 1792,272 1791,268 1789,260 1788,253 1787,248 1785,240 1784,234 1782,228 1780,220 1778,216 1776,211 1772,205 1768,200 1764,197 1760,194 1756,191 1750,188 1744,186 1739,184 1732,183 1724,182 1716,182 1708,182 1700,184 1696,185 1688,187 1684,189 1678,192 1674,196 1672,201 1671,208 1671,216 1672,221 1674,228 1676,234 1678,240 1680,244 1684,252 1685,256 1688,261 1691,268 1693,272 1696,278 1699,284 1701,288 1704,293 1708,300 1711,304 1714,308 1717,312 1720,316 1724,321"/><polyline points="0,302 8,301 12,300 20,299 28,298 36,297 44,297 52,297 60,298 68,299 76,299 84,299 92,298 99,296 104,293 108,290 112,285 115,280 117,276 119,268 120,262 120,256 120,250 119,244 118,236 116,231 113,224 111,220 107,216 101,212 96,210 88,209 80,209 72,209 64,209 56,208 52,208 44,207 36,206 28,205 24,204 16,202 8,200 4,199"/><polyline points="328,324 320,320 316,316 313,312 310,308 308,302 306,296 305,288 304,280 304,272 305,264 306,256 308,248 309,244 312,237 315,232 320,228 324,228 328,228 334,232 338,236 341,240 344,244 348,252 350,256 352,263 353,268 355,276 356,283 356,288 356,296 356,300 354,308 352,312 348,318 344,322 339,324"/><polyline points="1987,324 1986,316 1984,308 1982,304 1979,300 1975,296 1970,292 1964,288 1960,287 1952,284 1948,283 1940,282 1932,283 1925,284 1920,286 1915,288 1908,292 1904,294 1900,297 1895,300 1888,304 1884,306 1880,308 1872,312 1868,314 1864,316 1857,320 1852,322"/><polyline points="2141,324 2139,320 2136,316 2132,310 2128,305 2124,302 2120,299 2112,296 2112,296 2104,297 2099,300 2094,304 2090,308 2087,312 2084,317 2081,324"/><polyline points="1650,324 1648,320 1640,316 1640,316 1632,318 1628,320 1623,324"/><polyline points="252,0 252,8 252,16 252,24 252,28 252,32 253,40 256,46 260,52 264,56 268,59 272,62 276,66 280,69 284,73 288,78 292,83 295,88 298,92 300,97 303,104 304,112 303,120 301,128 299,132 296,137 292,141 288,144 282,148 276,150 272,152 264,155 260,157 253,160 248,163 244,166 240,170 236,174 232,180 230,184 228,188 225,196 224,202 223,208 223,216 223,224 224,230 225,236 228,244 229,248 232,255 234,260 236,265 239,272 240,276 243,284 245,288 247,296 248,300 250,308 251,316 252,323"/><polyline points="842,324 843,316 844,312 847,304 848,300 852,293 855,288 858,284 861,280 864,276 868,270 872,265 875,260 877,256 880,250 882,244 883,236 884,228 883,220 883,212 882,204 882,196 883,188 883,180 884,174 885,168 887,160 888,156 891,148 892,144 895,136 896,132 898,124 898,116 898,108 896,102 893,96 890,92 887,88 883,84 878,80 874,76 870,72 867,68 864,64 860,58 857,52 855,48 852,42 849,36 848,32 845,24 844,18 843,12 842,4"/><polyline points="1220,0 1222,8 1223,16 1224,23 1225,28 1226,36 1228,43 1229,48 1231,56 1232,60 1234,68 1236,76 1237,80 1238,88 1239,96 1240,104 1240,108 1241,116 1241,124 1241,132 1240,140 1240,144 1238,152 1236,159 1234,164 1232,168 1228,174 1224,178 1220,181 1214,184 1208,186 1200,186 1192,186 1184,184 1180,183 1172,181 1168,180 1160,178 1152,178 1144,179 1140,180 1132,184 1128,187 1124,192 1121,196 1119,200 1118,208 1118,216 1120,223 1122,228 1124,232 1128,239 1132,243 1136,247 1140,249 1146,252 1152,254 1160,255 1168,256 1172,257 1180,259 1184,261 1189,264 1194,268 1198,272 1202,276 1204,280 1208,286 1211,292 1213,296 1215,304 1216,308 1218,316 1220,324"/><polyline points="1449,0 1446,4 1443,8 1439,12 1436,16 1432,21 1428,28 1427,32 1425,40 1424,48 1424,52 1423,60 1423,68 1422,76 1421,84 1420,91 1419,96 1416,104 1414,108 1412,112 1404,114 1400,111 1396,104 1394,100 1392,94 1390,88 1389,80 1388,76 1388,68 1388,60 1388,56 1390,48 1392,41 1394,36 1396,32 1400,25 1403,20 1405,16 1407,8 1408,4"/><polyline points="1511,324 1504,320 1500,318 1496,315 1491,312 1487,308 1485,300 1487,292 1488,288 1492,280 1493,276 1496,271 1499,264 1501,260 1504,255 1508,248 1510,244 1512,240 1516,232 1518,228 1520,223 1523,216 1524,211 1526,204 1527,196 1527,188 1526,180 1525,172 1524,166 1523,160 1522,152 1521,144 1521,136 1522,128 1524,120 1525,116 1528,109 1530,104 1532,100 1536,93 1539,88 1541,84 1544,78 1547,72 1548,68 1550,60 1551,52 1551,44 1549,36 1548,32 1544,25 1541,20 1537,16 1533,12 1528,8 1524,5 1520,2"/><polyline points="1600,0 1598,4 1596,10 1594,16 1593,24 1594,32 1596,40 1597,44 1600,51 1602,56 1604,60 1608,68 1610,72 1612,80 1608,88 1605,92 1602,96 1600,100 1597,108 1597,116 1598,124 1600,130 1603,136 1605,140 1608,145 1612,150 1616,155 1620,160 1623,164 1626,168 1629,172 1632,177 1636,184 1638,188 1640,193 1643,200 1644,204 1647,212 1648,216 1650,224 1652,230 1654,236 1656,244 1656,248 1658,256 1658,264 1657,272 1655,276 1652,280 1648,284 1643,288 1637,292 1632,295 1628,298 1624,301 1620,304 1616,308 1612,312 1608,316 1604,322"/><polyline points="1997,324 1997,316 1996,311 1994,304 1992,300 1988,294 1984,289 1980,285 1976,282 1972,280 1964,276 1960,274 1953,272 1948,271 1940,269 1932,268 1924,269 1916,272 1912,274 1908,276 1903,280 1898,284 1893,288 1888,291 1884,294 1880,297 1875,300 1868,304 1864,306 1860,308 1852,312 1848,313 1840,315 1832,316 1824,313 1820,309 1816,305 1813,300 1811,296 1808,291 1805,284 1804,280 1801,272 1800,268 1798,260 1796,252 1796,248 1794,240 1793,232 1792,227 1790,220 1788,212 1787,208 1784,202 1780,196 1777,192 1772,188 1768,185 1764,182 1759,180 1752,177 1748,175 1740,173 1736,172 1728,170 1720,169 1712,169 1706,168 1700,167 1692,166 1684,164 1680,163 1673,160 1668,157 1664,154 1660,150 1656,146 1652,141 1648,136 1646,132 1644,128 1640,122 1637,116 1635,112 1632,107 1628,100 1626,96 1624,91 1621,84 1624,77 1628,72 1631,68 1635,64 1638,60 1641,56 1644,52 1648,47 1652,41 1655,36 1657,32 1660,27 1664,20 1666,16 1668,12 1672,6 1676,0"/><polyline points="1713,0 1718,4 1723,8 1728,12 1732,15 1736,19 1740,22 1744,26 1748,29 1752,32 1757,36 1763,40 1768,43 1772,44 1780,47 1784,48 1792,51 1796,53 1801,56 1805,60 1808,64 1812,72 1813,76 1815,84 1816,89 1817,96 1818,104 1818,112 1819,120 1820,126 1821,132 1823,140 1825,144 1828,149 1832,154 1836,157 1841,160 1848,163 1852,164 1860,166 1867,168 1872,169 1880,170 1888,171 1896,170 1902,168 1908,165 1912,163 1916,160 1920,156 1924,152 1928,148 1932,143 1936,138 1940,132 1943,128 1945,124 1948,117 1950,112 1952,105 1953,100 1955,92 1957,88 1959,80 1961,76 1964,71 1968,64 1971,60 1973,56 1976,51 1980,44 1982,40 1984,36 1988,28 1989,24 1992,17 1994,12 1996,4 1996,0"/><polyline points="2072,0 2069,8 2068,13 2066,20 2064,28 2064,32 2062,40 2060,46 2058,52 2056,57 2053,64 2051,68 2048,73 2044,78 2040,82 2036,85 2031,88 2024,90 2016,91 2008,92 2004,92 1996,93 1988,96 1984,98 1980,101 1976,106 1972,112 1970,116 1968,124 1969,132 1970,140 1972,147 1974,152 1976,157 1979,164 1982,168 1985,172 1988,176 1992,180 1997,184 2004,187 2008,189 2016,190 2024,190 2032,190 2040,191 2048,192 2052,193 2058,196 2064,199 2068,202 2072,204 2077,208 2083,212 2088,216 2092,218 2096,220 2104,224 2112,224 2119,220 2124,216 2128,212 2132,208 2135,204 2138,200 2140,196 2144,190 2147,184 2149,180 2152,175 2156,168 2158,164 2160,159 2164,152 2166,148 2168,144 2172,138 2176,133 2180,130 2188,128 2196,129 2204,130 2212,131 2220,131 2228,130 2233,128 2240,124 2244,120 2248,116 2251,112 2253,108 2256,100 2256,96 2256,92 2253,84 2251,80 2247,76 2243,72 2238,68 2232,64 2228,62 2220,60 2212,61 2204,62 2199,64 2192,67 2188,68 2182,68 2176,64 2174,60 2172,56 2169,48 2168,44 2165,36 2164,32 2162,24 2160,20 2157,12 2155,8 2152,1"/><polyline points="2425,0 2428,6 2432,12 2436,16 2440,18 2446,16 2451,12 2455,8 2460,4 2464,1"/><polyline points="656,317 648,316 644,315 637,312 632,310 626,308 620,306 612,304 608,303 600,302 592,301 584,301 577,300 572,299 565,296 560,292 556,288 553,284 550,280 548,276 544,270 540,264 537,260 533,256 530,252 526,248 522,244 517,240 513,236 510,232 507,228 504,224 500,218 497,212 495,208 492,200 491,196 489,188 488,184 486,176 484,170 483,164 481,156 480,152 478,144 476,136 476,132 475,124 474,116 474,108 475,100 476,96 478,88 480,83 483,76 485,72 488,66 492,60 495,56 499,52 503,48 508,44 512,42 517,40 524,40 528,41 532,44 536,49 540,56 542,60 544,66 546,72 548,77 550,84 552,89 554,96 556,103 557,108 560,116 561,120 563,128 565,132 567,140 569,144 572,152 574,156 577,160 584,164 585,164 592,160 595,156 598,152 600,148 604,141 606,136 608,132 612,124 614,120 616,116 620,109 623,104 625,100 628,95 632,88 634,84 636,80 640,72 641,68 644,61 646,56 648,50 650,44 652,36 653,32 655,24 656,20 659,12 662,8 668,6 673,8 680,11 684,14 688,16 694,20 700,24 704,27 708,30 712,33 716,36 720,40 724,44 728,49 732,54 736,60 738,64 740,68 743,76 744,80 746,88 746,96 746,104 746,112 745,120 744,124 742,132 740,140 739,144 737,152 736,156 734,164 732,170 730,176 728,182 726,188 724,193 721,200 720,204 716,212 715,216 712,222 709,228 707,232 704,239 701,244 699,248 696,253 692,260 690,264 687,268 684,274 680,280 678,284 675,288 672,294 668,300 666,304 664,308 660,314 656,317"/><polyline points="141,144 148,140 152,137 156,135 160,132 165,128 170,124 174,120 178,116 182,112 185,108 188,102 191,96 192,90 192,84 191,80 188,75 184,71 179,68 172,65 168,63 160,61 156,60 148,59 140,60 136,61 130,64 126,68 123,72 120,76 117,84 116,88 114,96 114,104 114,112 114,120 116,128 117,132 120,140 123,144 128,147 136,146 141,144"/><polyline points="2560,185 2556,182 2552,179 2548,176 2544,172 2540,168 2536,163 2532,159 2528,154 2524,150 2520,146 2516,143 2512,139 2508,136 2502,132 2497,128 2492,124 2488,121 2484,117 2480,113 2476,109 2472,104 2469,100 2466,96 2463,92 2460,88 2456,82 2452,77 2448,72 2444,68 2440,66 2435,68 2430,72 2427,76 2424,80 2420,85 2416,90 2412,95 2408,99 2404,104 2400,108 2397,112 2393,116 2389,120 2385,124 2382,128 2378,132 2374,136 2371,140 2368,144 2364,149 2360,155 2356,160 2354,164 2352,168 2348,176 2346,180 2344,188 2343,192 2344,200 2344,204 2347,212 2349,216 2352,221 2356,228 2358,232 2361,236 2364,241 2368,248 2370,252 2373,256 2376,261 2380,268 2383,272 2386,276 2388,280 2392,285 2396,289 2400,294 2404,299 2408,304 2411,308 2414,312 2417,316 2420,321"/><polyline points="0,310 8,309 12,308 20,307 28,306 36,306 44,307 51,308 56,309 64,311 68,313 76,316 80,317 88,319 93,320 100,320 104,320 112,317 116,314 120,311 124,305 127,300 129,296 131,288 132,284 133,276 134,268 134,260 133,252 132,244 131,240 130,232 128,225 126,220 124,213 122,208 120,203 116,197 112,193 108,192 100,191 96,192 88,194 80,196 76,197 68,198 60,198 52,198 44,197 36,197 30,196 24,195 16,193 11,192 4,189 0,187"/><polyline points="1404,249 1396,249 1392,244 1390,240 1388,233 1387,228 1388,220 1388,216 1391,208 1394,204 1397,200 1404,198 1408,203 1409,208 1410,216 1410,224 1409,232 1408,239 1406,244 1404,249"/><polyline points="336,289 328,291 324,288 320,282 319,276 318,268 320,260 322,256 328,252 328,252 334,256 337,260 340,268 340,272 340,280 339,284 336,289"/><polyline points="2150,324 2148,320 2144,313 2141,308 2138,304 2136,300 2132,295 2128,290 2124,286 2120,283 2112,280 2104,282 2100,284 2096,288 2092,292 2088,297 2084,302 2081,308 2078,312 2076,317 2073,324"/><polyline points="1410,324 1411,316 1412,311 1414,304 1417,300 1424,298 1429,300 1436,303 1440,305 1446,308 1451,312 1453,316 1452,322"/><polyline points="2474,324 2480,322 2488,320 2492,320 2500,319 2508,318 2516,318 2524,317 2532,316 2536,315 2544,314 2552,313 2556,312"/><polyline points="1679,324 1684,320 1688,319 1696,319 1700,321 1706,324"/><polyline points="66,0 71,4 75,8 80,12 84,16 88,20 92,24 95,28 98,32 100,36 102,44 103,52 102,60 102,68 101,76 100,84 100,92 100,96 100,104 100,108 100,116 101,124 102,132 102,140 102,148 101,156 100,161 97,168 94,172 89,176 84,179 80,182 74,184 68,185 60,187 52,187 44,187 36,187 28,186 20,184 16,183 8,180 4,179"/><polyline points="243,0 242,8 241,16 239,20 237,28 235,32 232,40 230,44 227,48 224,52 216,56 212,56 208,56 200,55 192,53 188,52 180,49 176,48 168,44 164,42 160,40 154,36 149,32 145,28 143,24 140,16 140,12 140,7 141,0"/><polyline points="852,324 852,320 854,312 856,308 860,300 863,296 866,292 869,288 873,284 876,280 880,276 884,272 889,268 893,264 898,260 902,256 908,252 912,249 916,246 919,240 915,236 910,232 906,228 903,224 900,218 898,212 896,207 895,200 894,192 895,184 896,176 897,172 899,164 901,160 904,153 906,148 908,144 911,136 913,132 914,124 914,116 913,108 912,100 911,96 908,88 906,84 904,80 900,75 896,70 892,67 887,64 881,60 876,56 872,53 868,48 865,44 863,40 860,36 857,28 855,24 853,16 852,11 851,4"/><polyline points="1212,0 1214,8 1215,16 1216,22 1217,28 1219,36 1220,42 1222,48 1224,56 1225,60 1227,68 1228,72 1230,80 1231,88 1232,92 1233,100 1234,108 1234,116 1234,124 1233,132 1232,140 1231,144 1229,152 1227,156 1224,162 1220,167 1216,170 1212,173 1204,175 1196,176 1188,175 1180,173 1175,172 1168,170 1160,169 1154,168 1148,168 1144,168 1136,170 1131,172 1124,176 1120,178 1116,181 1112,185 1108,189 1104,196 1103,200 1102,208 1104,215 1106,220 1108,226 1111,232 1113,236 1116,241 1120,248 1123,252 1126,256 1131,260 1136,264 1140,265 1148,267 1156,268 1163,268 1168,269 1176,270 1180,272 1187,276 1191,280 1195,284 1198,288 1201,292 1204,299 1206,304 1208,309 1210,316 1212,324"/><polyline points="1582,0 1578,4 1573,8 1568,10 1560,10 1553,8 1548,5 1544,3 1539,0"/><polyline points="2064,0 2063,4 2061,12 2060,19 2059,24 2057,32 2056,38 2054,44 2052,50 2049,56 2047,60 2044,65 2040,70 2036,73 2031,76 2024,78 2016,78 2008,77 2004,76 1997,72 1994,68 1992,64 1991,56 1992,50 1993,44 1996,36 1997,32 1999,24 2001,20 2003,12 2004,8 2006,0"/><polyline points="2159,324 2156,318 2153,312 2150,308 2148,304 2144,297 2141,292 2139,288 2136,282 2132,276 2130,272 2128,268 2125,260 2123,256 2123,248 2125,244 2128,236 2130,232 2133,228 2136,222 2140,216 2142,212 2144,208 2148,201 2151,196 2153,192 2156,187 2160,180 2162,176 2164,172 2168,166 2172,160 2176,156 2180,152 2184,150 2190,148 2196,147 2204,147 2211,148 2216,149 2224,149 2232,150 2240,150 2248,149 2252,147 2260,144 2264,142 2268,140 2275,136 2280,133 2284,131 2291,128 2296,125 2300,121 2304,117 2307,112 2309,108 2312,100 2313,96 2314,88 2314,80 2312,72 2311,68 2308,63 2304,60 2296,57 2288,57 2280,57 2272,57 2268,56 2260,53 2256,52 2248,48 2244,46 2238,44 2232,42 2224,40 2220,40 2212,39 2204,39 2196,39 2188,38 2184,35 2180,32 2176,27 2172,20 2170,16 2167,12 2164,6 2161,0"/><polyline points="2404,0 2408,7 2410,12 2412,16 2414,24 2416,31 2417,36 2417,44 2417,52 2416,57 2414,64 2412,71 2410,76 2408,80 2404,86 2400,92 2397,96 2394,100 2390,104 2387,108 2383,112 2379,116 2375,120 2371,124 2366,128 2362,132 2358,136 2354,140 2350,144 2345,148 2341,152 2337,156 2332,160 2328,164 2324,167 2320,171 2316,175 2312,179 2308,183 2304,187 2300,192 2299,196 2301,200 2305,204 2310,208 2316,212 2320,215 2324,219 2328,222 2332,226 2336,230 2340,234 2344,239 2348,244 2351,248 2354,252 2356,256 2360,263 2363,268 2365,272 2368,278 2372,284 2374,288 2377,292 2380,296 2384,301 2388,306 2392,311 2396,316 2399,320 2402,324"/><polyline points="2560,173 2556,170 2552,166 2548,161 2544,156 2541,152 2538,148 2536,144 2532,139 2528,135 2524,131 2520,128 2515,124 2509,120 2504,117 2500,114 2496,111 2492,108 2488,104 2484,99 2480,94 2476,88 2473,84 2471,80 2468,72 2466,68 2464,60 2463,56 2463,48 2463,40 2464,35 2466,28 2468,23 2472,17 2476,13 2480,9 2484,7 2490,4 2496,2 2504,1"/><polyline points="2006,324 2007,316 2006,308 2004,301 2002,296 2000,292 1996,286 1992,282 1988,278 1984,275 1980,272 1974,268 1968,265 1964,263 1956,260 1952,259 1944,256 1940,255 1932,253 1924,253 1916,255 1912,257 1907,260 1902,264 1898,268 1894,272 1890,276 1885,280 1880,284 1876,287 1872,290 1868,293 1862,296 1856,299 1852,301 1844,303 1836,303 1828,300 1824,297 1820,292 1817,288 1815,284 1812,278 1810,272 1808,266 1806,260 1805,252 1804,248 1803,240 1802,232 1801,224 1800,218 1799,212 1798,204 1796,196 1795,192 1792,186 1788,181 1784,178 1780,176 1772,172 1768,171 1761,168 1756,166 1748,164 1744,163 1736,161 1730,160 1724,159 1716,157 1709,156 1704,155 1696,152 1692,150 1687,148 1681,144 1676,140 1672,136 1669,132 1666,128 1664,124 1660,117 1658,112 1656,108 1653,100 1652,93 1651,88 1651,80 1652,76 1654,68 1656,61 1658,56 1660,52 1664,44 1666,40 1668,36 1672,30 1676,25 1680,20 1684,16 1688,14 1692,12 1700,11 1707,12 1712,14 1717,16 1723,20 1728,23 1732,26 1736,30 1740,33 1744,36 1749,40 1754,44 1760,48 1764,51 1768,53 1774,56 1780,59 1784,61 1790,64 1795,68 1799,72 1802,76 1804,81 1806,88 1808,96 1809,100 1809,108 1810,116 1810,124 1810,132 1811,140 1812,148 1813,152 1816,159 1820,163 1824,166 1830,168 1836,170 1844,172 1848,173 1856,174 1864,176 1868,177 1876,179 1883,180 1888,181 1896,182 1904,181 1908,180 1915,176 1920,173 1924,170 1928,166 1932,163 1936,160 1944,156 1948,155 1953,156 1959,160 1962,164 1966,168 1969,172 1972,176 1976,181 1980,186 1984,190 1988,193 1992,196 2000,200 2004,201 2012,202 2020,202 2028,202 2036,202 2044,202 2050,204 2056,206 2060,208 2066,212 2071,216 2076,220 2080,224 2084,228 2088,232 2091,236 2094,240 2096,244 2099,252 2098,260 2096,265 2092,272 2090,276 2088,280 2084,286 2080,292 2078,296 2076,300 2072,307 2070,312 2068,317 2065,324"/><polyline points="648,289 640,290 632,289 627,288 620,286 612,284 608,283 600,281 594,280 588,278 580,276 576,274 572,272 567,268 563,264 559,260 555,256 551,252 547,248 542,244 536,240 532,237 528,234 524,231 520,228 515,224 511,220 508,216 504,210 501,204 499,200 496,192 495,188 492,180 491,176 489,168 488,164 486,156 484,148 483,144 482,136 481,128 480,120 480,112 481,104 483,96 484,92 487,84 489,80 492,74 496,69 500,64 504,61 508,58 512,56 520,55 524,56 529,60 533,64 536,69 540,76 542,80 544,86 546,92 548,98 550,104 552,112 553,116 555,124 556,129 558,136 559,144 560,148 562,156 564,163 565,168 568,176 570,180 572,185 576,190 580,193 588,192 592,188 595,184 597,180 600,174 603,168 604,164 607,156 609,152 612,144 613,140 616,134 619,128 621,124 624,117 627,112 629,108 632,103 636,97 639,92 641,88 644,84 648,77 651,72 653,68 656,62 660,56 662,52 664,48 668,43 672,39 680,36 684,36 688,36 696,38 700,40 707,44 712,47 716,50 720,54 724,58 728,63 731,68 733,72 736,78 738,84 740,92 740,96 740,104 740,112 740,116 739,124 737,132 736,137 734,144 732,152 731,156 729,164 728,168 725,176 724,180 721,188 719,192 716,200 714,204 712,209 709,216 707,220 704,226 701,232 699,236 696,240 692,247 689,252 686,256 683,260 680,264 676,269 672,273 668,277 664,281 659,284 652,288 648,289"/><polyline points="141,324 142,316 144,308 144,304 145,296 146,288 146,280 146,272 146,264 145,256 144,248 144,244 142,236 140,228 140,224 138,216 136,208 136,204 135,196 135,188 136,180 137,176 140,169 144,164 147,160 151,156 155,152 160,148 164,145 168,142 172,138 176,135 180,132 185,128 190,124 194,120 197,116 200,112 204,107 208,101 211,96 213,92 216,86 220,80 222,76 226,72 232,69 240,70 248,72 252,73 259,76 264,79 268,82 272,86 276,90 280,96 282,100 284,106 285,112 284,120 283,124 280,129 276,134 272,137 268,140 261,144 256,146 252,149 246,152 240,156 236,160 232,164 229,168 226,172 224,176 221,184 219,188 217,196 216,204 216,208 215,216 216,224 217,228 218,236 220,241 222,248 224,252 227,260 229,264 232,271 234,276 236,281 238,288 240,295 241,300 243,308 243,316 243,324"/><polyline points="1533,324 1528,321 1524,318 1520,315 1516,312 1512,308 1508,302 1505,296 1504,288 1505,280 1507,272 1508,268 1512,260 1513,256 1516,251 1519,244 1521,240 1524,235 1527,228 1529,224 1532,216 1533,212 1535,204 1536,200 1537,192 1537,184 1537,176 1536,168 1536,164 1535,156 1534,148 1534,140 1535,132 1536,128 1540,120 1543,116 1548,112 1552,110 1559,112 1563,116 1566,120 1568,124 1572,131 1575,136 1577,140 1580,145 1584,151 1588,156 1592,160 1596,164 1599,168 1603,172 1607,176 1611,180 1614,184 1617,188 1620,192 1624,199 1627,204 1629,208 1632,215 1634,220 1636,227 1637,232 1639,240 1639,248 1639,256 1637,264 1635,268 1632,274 1628,279 1624,284 1620,288 1616,291 1612,295 1608,299 1604,303 1600,307 1596,311 1592,316 1589,320 1585,324"/><polyline points="1044,180 1048,172 1047,164 1045,156 1044,152 1040,144 1038,140 1034,136 1028,135 1024,136 1020,140 1016,146 1014,152 1013,160 1015,168 1017,172 1021,176 1026,180 1032,183 1040,182 1044,180"/><polyline points="0,319 8,317 16,316 20,316 28,316 35,316 40,317 48,319 52,320 59,324"/><polyline points="2537,324 2544,323 2552,321 2557,320"/><polyline points="38,0 44,3 48,5 52,8 56,12 60,17 64,23 67,28 69,32 72,40 73,44 76,52 77,56 79,64 80,68 82,76 83,84 84,92 84,96 85,104 86,112 87,120 87,128 87,136 87,144 85,152 83,156 80,161 76,165 72,168 64,172 60,173 52,174 44,175 36,174 28,174 20,172 16,171 10,168 4,164 0,160"/><polyline points="235,0 232,8 231,12 228,18 224,24 221,28 216,32 212,34 208,36 200,37 192,37 188,36 180,33 176,30 172,27 168,23 164,18 161,12 160,8 158,0"/><polyline points="864,324 865,320 868,312 870,308 873,304 876,300 880,296 884,292 889,288 895,284 900,281 904,279 912,276 916,275 924,274 932,273 938,272 944,270 949,268 955,264 958,260 960,256 962,248 962,240 961,232 959,228 956,222 952,216 948,212 944,209 940,207 935,204 928,201 924,199 920,196 916,190 915,184 915,176 916,172 919,164 921,160 924,152 925,148 927,140 928,132 927,124 926,116 925,108 924,103 922,96 920,88 919,84 916,76 914,72 912,67 908,61 904,56 900,52 896,49 892,46 888,43 883,40 878,36 874,32 871,28 868,23 865,16 864,10 863,4"/><polyline points="1204,0 1206,8 1207,16 1208,22 1209,28 1211,36 1212,41 1214,48 1216,56 1217,60 1220,68 1221,72 1223,80 1224,85 1225,92 1227,100 1227,108 1228,116 1227,124 1226,132 1224,140 1223,144 1220,151 1217,156 1212,160 1208,163 1204,165 1196,166 1188,165 1180,164 1176,163 1168,161 1163,160 1156,159 1148,159 1140,159 1136,160 1128,162 1124,164 1116,167 1112,169 1106,172 1100,175 1096,177 1088,179 1080,179 1076,176 1072,171 1068,165 1065,160 1063,156 1060,148 1059,144 1057,136 1056,132 1054,124 1053,116 1053,108 1053,100 1053,92 1053,84 1052,77 1050,72 1048,67 1044,64 1039,64 1035,68 1032,76 1031,80 1029,88 1027,92 1024,100 1022,104 1020,108 1016,114 1012,120 1009,124 1006,128 1004,132 1000,138 997,144 996,148 994,156 995,164 996,170 999,176 1001,180 1004,184 1008,189 1012,192 1017,196 1024,199 1028,201 1036,203 1044,204 1052,204 1060,203 1068,203 1074,204 1080,208 1084,211 1088,216 1091,220 1093,224 1096,228 1100,234 1103,240 1106,244 1108,248 1112,254 1116,260 1118,264 1121,268 1125,272 1130,276 1136,280 1140,281 1148,281 1156,281 1164,281 1172,282 1177,284 1184,288 1188,292 1192,296 1194,300 1196,304 1200,312 1201,316 1203,324"/><polyline points="2055,0 2054,8 2053,16 2052,21 2051,28 2049,36 2048,40 2044,48 2042,52 2039,56 2035,60 2028,64 2024,64 2020,64 2012,60 2009,56 2007,52 2006,44 2007,36 2008,31 2010,24 2012,16 2013,12 2015,4 2016,0"/><polyline points="2384,0 2387,4 2391,8 2393,12 2396,17 2399,24 2400,28 2402,36 2403,44 2403,52 2402,60 2400,67 2398,72 2396,77 2392,84 2389,88 2386,92 2382,96 2378,100 2374,104 2369,108 2364,111 2360,113 2354,116 2348,117 2343,116 2339,112 2337,104 2336,100 2335,92 2335,84 2334,76 2333,68 2332,60 2332,56 2330,48 2328,41 2325,36 2322,32 2316,29 2312,28 2307,28 2300,29 2292,31 2284,32 2280,32 2272,33 2266,32 2260,31 2252,29 2248,28 2240,25 2234,24 2228,23 2220,22 2212,21 2204,21 2200,20 2192,18 2188,15 2183,12 2179,8 2176,4"/><polyline points="2560,155 2556,149 2553,144 2552,140 2548,132 2546,128 2544,124 2540,118 2536,114 2532,111 2526,108 2520,105 2516,104 2509,100 2504,97 2500,94 2496,91 2492,87 2488,81 2485,76 2483,72 2480,64 2479,60 2478,52 2478,44 2479,36 2481,32 2484,26 2488,21 2492,18 2496,16 2504,12 2508,11 2516,10 2524,8 2528,8 2536,6 2544,4 2548,4 2556,2"/><polyline points="1784,154 1776,156 1768,155 1760,154 1752,153 1746,152 1740,151 1732,149 1725,148 1720,147 1712,145 1708,144 1700,140 1696,138 1692,136 1687,132 1683,128 1679,124 1676,119 1672,112 1670,108 1668,103 1666,96 1664,88 1664,80 1665,72 1667,64 1668,60 1671,52 1673,48 1676,43 1680,38 1684,33 1688,30 1692,27 1700,24 1708,25 1716,27 1720,29 1725,32 1731,36 1736,40 1740,43 1744,46 1748,49 1752,53 1756,56 1762,60 1767,64 1772,67 1776,70 1780,73 1784,76 1788,80 1792,85 1795,92 1796,96 1798,104 1798,112 1798,120 1797,128 1796,136 1795,140 1792,147 1788,151 1784,154"/><polyline points="648,272 640,273 636,272 628,270 624,268 617,264 612,260 608,257 604,252 601,248 599,244 597,236 597,228 598,220 600,214 601,208 603,200 604,196 607,188 608,183 610,176 612,168 613,164 616,156 617,152 620,144 621,140 624,134 627,128 629,124 632,118 636,112 638,108 641,104 644,100 648,94 652,89 655,84 658,80 661,76 665,72 668,68 672,63 676,60 683,56 688,55 696,55 701,56 708,59 712,61 716,65 720,68 724,73 728,80 730,84 732,90 733,96 734,104 734,112 733,120 732,128 732,132 730,140 728,148 727,152 725,160 724,164 721,172 720,176 717,184 715,188 712,196 710,200 708,205 705,212 703,216 700,221 696,228 694,232 691,236 688,241 684,246 680,251 676,256 672,260 668,263 664,266 660,268 652,271 648,272"/><polyline points="552,220 544,223 536,222 531,220 524,217 520,214 516,211 512,206 508,201 505,196 503,192 500,185 498,180 496,173 494,168 492,160 491,156 489,148 488,140 487,136 487,128 486,120 487,112 488,104 489,100 491,92 493,88 496,83 500,78 504,74 508,71 516,69 524,71 528,74 532,79 535,84 537,88 540,95 542,100 544,107 545,112 547,120 548,124 550,132 551,140 552,146 553,152 554,160 555,168 556,176 556,180 557,188 558,196 558,204 557,212 556,216 552,220"/><polyline points="158,324 157,316 157,308 157,300 157,292 158,284 158,276 158,268 157,260 157,252 156,247 155,240 153,232 152,226 151,220 149,212 149,204 148,196 149,188 151,180 153,176 156,171 160,166 164,161 168,157 172,154 176,151 180,148 187,144 192,141 196,138 200,135 204,132 209,128 213,124 216,120 220,114 224,109 228,105 232,101 236,98 242,96 248,96 252,97 257,100 261,104 264,112 264,112 263,120 260,124 256,129 252,132 245,136 240,139 236,142 232,145 228,148 224,153 220,159 218,164 216,168 213,176 212,180 210,188 208,196 208,200 207,208 207,216 208,224 208,228 210,236 212,241 215,248 217,252 220,259 222,264 224,268 227,276 229,280 232,288 233,292 234,300 236,308 236,316 235,324"/><polyline points="2170,324 2167,320 2164,315 2160,308 2158,304 2156,300 2152,292 2150,288 2148,284 2145,276 2144,272 2142,264 2141,256 2141,248 2142,240 2144,235 2146,228 2148,224 2152,216 2154,212 2156,207 2160,200 2162,196 2164,192 2168,185 2172,180 2175,176 2178,172 2183,168 2188,165 2192,164 2200,163 2208,163 2212,164 2220,167 2224,169 2229,172 2233,176 2236,180 2239,188 2240,192 2242,200 2244,208 2245,212 2247,220 2250,224 2252,228 2256,232 2264,236 2268,237 2276,237 2284,237 2292,236 2300,236 2308,238 2315,240 2320,243 2324,245 2328,249 2332,253 2336,257 2340,263 2343,268 2345,272 2348,280 2349,284 2352,291 2354,296 2356,300 2360,306 2364,311 2368,314 2372,318 2376,321"/><polyline points="1568,317 1560,319 1552,318 1546,316 1540,313 1536,311 1531,308 1527,304 1523,300 1520,295 1517,288 1517,280 1518,272 1520,264 1522,260 1524,254 1527,248 1529,244 1532,238 1535,232 1537,228 1540,221 1542,216 1544,211 1546,204 1548,199 1550,192 1552,185 1554,180 1556,174 1560,170 1568,169 1574,172 1580,175 1584,178 1588,181 1592,184 1597,188 1601,192 1605,196 1608,200 1612,205 1616,211 1618,216 1620,220 1623,228 1624,232 1626,240 1626,248 1625,256 1624,260 1620,268 1618,272 1615,276 1611,280 1608,284 1604,288 1600,292 1596,296 1591,300 1587,304 1582,308 1577,312 1572,315 1568,317"/><polyline points="2017,324 2018,316 2017,308 2016,301 2014,296 2012,291 2008,284 2006,280 2003,276 1999,272 1995,268 1991,264 1986,260 1980,256 1976,254 1972,252 1964,248 1960,246 1955,244 1948,241 1944,239 1938,236 1932,233 1928,231 1920,229 1912,232 1908,236 1904,240 1901,244 1898,248 1895,252 1892,256 1888,261 1884,266 1880,270 1876,274 1872,277 1868,280 1863,284 1856,287 1852,289 1844,290 1836,289 1832,287 1828,284 1824,280 1820,273 1818,268 1816,263 1814,256 1812,248 1812,244 1811,236 1810,228 1810,220 1810,212 1812,204 1812,200 1816,192 1819,188 1824,185 1828,184 1836,182 1844,182 1852,183 1858,184 1864,185 1872,187 1876,189 1884,192 1888,193 1895,196 1900,198 1908,200 1916,198 1920,196 1925,192 1930,188 1936,184 1940,182 1948,181 1956,184 1960,187 1964,191 1968,195 1972,199 1976,203 1980,206 1984,209 1989,212 1996,214 2004,216 2012,216 2020,215 2028,214 2036,213 2044,214 2050,216 2056,219 2060,221 2064,224 2068,228 2072,232 2076,238 2079,244 2080,248 2082,256 2081,264 2080,268 2077,276 2075,280 2072,287 2069,292 2067,296 2064,303 2062,308 2060,312 2057,320"/><polyline points="225,0 224,4 220,10 216,15 212,18 208,21 200,22 192,22 188,20 182,16 178,12 175,8 172,1"/><polyline points="1195,0 1196,5 1197,12 1199,20 1200,26 1201,32 1203,40 1204,44 1206,52 1208,57 1210,64 1212,69 1214,76 1216,83 1217,88 1219,96 1220,104 1220,108 1220,116 1220,123 1219,128 1217,136 1216,140 1212,146 1208,150 1204,153 1196,156 1192,156 1188,156 1180,155 1172,153 1168,152 1160,150 1152,150 1144,150 1136,151 1129,152 1124,153 1116,156 1112,157 1104,159 1096,160 1088,158 1084,156 1079,152 1076,148 1072,140 1070,136 1068,128 1068,124 1067,116 1067,108 1067,100 1067,92 1067,84 1067,76 1065,68 1064,63 1061,56 1059,52 1056,48 1052,43 1048,40 1040,36 1036,36 1032,37 1028,40 1024,46 1022,52 1020,60 1019,64 1018,72 1016,80 1015,84 1013,92 1011,96 1008,103 1005,108 1002,112 1000,116 996,121 992,126 988,131 984,136 981,140 977,144 974,148 972,152 968,157 964,161 958,160 955,156 952,152 948,144 947,140 944,133 942,128 940,121 938,116 936,109 935,104 932,96 931,92 929,84 928,80 925,72 924,68 921,60 919,56 916,49 913,44 910,40 906,36 902,32 898,28 894,24 890,20 886,16 884,12 882,4"/><polyline points="2304,0 2300,3 2296,5 2289,8 2284,10 2276,11 2268,11 2260,11 2252,9 2244,8 2240,7 2232,7 2224,6 2216,5 2208,5 2204,4 2196,2"/><polyline points="0,12 4,11 12,10 20,10 28,12 32,14 36,16 40,20 44,25 47,32 49,36 50,44 50,52 49,60 48,65 45,72 41,76 36,80 32,81 24,83 16,84 9,84 7,84 0,84"/><polyline points="2028,41 2024,36 2024,32 2024,28 2027,20 2028,16 2032,10 2037,12 2038,20 2038,28 2036,34 2032,39 2028,41"/><polyline points="2560,84 2552,83 2544,83 2536,82 2528,81 2520,80 2516,79 2510,76 2505,72 2501,68 2499,64 2496,57 2495,52 2495,44 2497,40 2500,34 2504,30 2508,27 2516,24 2520,23 2528,21 2532,20 2540,18 2548,16 2552,15 2560,13"/><polyline points="2368,84 2360,84 2356,80 2354,76 2352,68 2352,64 2351,56 2351,48 2352,41 2353,36 2356,28 2359,24 2364,21 2372,22 2376,24 2381,28 2384,33 2387,40 2388,48 2387,56 2385,64 2384,68 2380,74 2376,79 2372,82 2368,84"/><polyline points="1768,137 1760,139 1752,139 1744,139 1736,138 1728,137 1722,136 1716,134 1709,132 1704,130 1700,127 1696,124 1691,120 1688,116 1684,111 1680,104 1678,100 1676,92 1675,88 1675,80 1675,72 1676,68 1679,60 1680,56 1684,50 1688,45 1692,41 1696,38 1704,36 1708,36 1712,36 1720,39 1724,41 1728,44 1734,48 1738,52 1743,56 1747,60 1752,64 1756,68 1760,72 1764,75 1768,79 1772,83 1776,88 1778,92 1780,96 1783,104 1783,112 1782,120 1780,125 1776,131 1772,135 1768,137"/><polyline points="656,257 648,258 640,257 636,256 629,252 625,248 621,244 619,240 616,233 615,228 614,220 613,212 614,204 615,196 616,188 616,184 618,176 620,168 621,164 623,156 624,152 627,144 629,140 632,134 635,128 637,124 640,120 644,114 648,109 652,104 655,100 659,96 662,92 666,88 670,84 675,80 680,76 684,74 688,72 696,71 703,72 708,74 712,77 716,80 720,85 723,92 725,96 727,104 727,112 727,120 726,128 725,136 724,142 723,148 720,156 719,160 717,168 716,172 713,180 711,184 708,192 706,196 704,201 700,208 698,212 696,216 692,223 689,228 686,232 683,236 680,240 676,244 672,248 666,252 660,256 656,257"/><polyline points="536,200 528,202 523,200 517,196 513,192 510,188 508,184 504,176 503,172 500,165 499,160 496,152 495,148 494,140 493,132 493,124 493,116 494,108 496,101 498,96 500,92 504,87 508,84 516,82 522,84 527,88 530,92 532,96 536,104 537,108 539,116 540,120 542,128 543,136 544,141 545,148 545,156 545,164 545,172 545,180 544,186 542,192 540,196 536,200"/><polyline points="52,150 44,151 36,151 28,148 24,144 23,140 24,135 28,130 32,127 37,124 44,120 48,118 56,119 60,122 62,128 63,136 60,144 56,148 52,150"/><polyline points="170,324 169,316 168,308 168,302 168,296 168,292 168,284 169,276 170,268 170,260 170,252 170,244 169,236 168,230 167,224 165,216 164,211 163,204 163,196 164,192 167,184 169,180 172,175 176,171 181,168 188,166 195,168 197,172 198,180 197,188 196,196 196,200 195,208 195,216 195,224 196,228 198,236 200,240 204,247 207,252 209,256 212,261 216,268 218,272 220,276 223,284 225,288 227,296 228,304 228,308 228,315 227,320"/><polyline points="2186,324 2182,320 2178,316 2175,312 2172,308 2168,302 2164,296 2163,292 2160,286 2158,280 2156,275 2154,268 2153,260 2153,252 2154,244 2156,236 2157,232 2160,225 2162,220 2164,215 2168,208 2170,204 2172,200 2176,194 2180,189 2184,186 2188,183 2196,180 2200,180 2204,180 2212,184 2216,187 2220,192 2223,196 2224,200 2227,208 2228,212 2231,220 2232,224 2236,232 2238,236 2241,240 2244,244 2248,248 2253,252 2260,255 2266,256 2272,256 2280,256 2288,256 2296,257 2304,259 2308,261 2313,264 2317,268 2320,272 2323,280 2324,284 2325,292 2324,300 2323,304 2320,311 2317,316 2314,320 2310,324"/><polyline points="1848,276 1841,276 1836,274 1832,271 1828,265 1825,260 1824,256 1822,248 1820,240 1820,235 1820,228 1820,224 1822,216 1824,209 1827,204 1831,200 1836,196 1840,195 1848,194 1856,194 1864,196 1868,197 1873,200 1879,204 1884,208 1887,212 1889,216 1890,224 1889,232 1888,236 1885,244 1882,248 1880,252 1876,257 1872,262 1868,266 1864,269 1860,272 1852,276 1848,276"/><polyline points="882,324 884,319 888,312 891,308 895,304 900,300 904,298 908,296 916,292 920,291 928,290 936,288 940,288 948,286 955,284 960,282 964,280 969,276 972,272 976,264 977,260 978,252 979,244 979,236 979,228 978,220 977,212 977,204 980,198 988,200 992,202 997,204 1004,207 1008,209 1016,212 1020,213 1028,215 1032,216 1040,217 1048,218 1056,219 1062,220 1068,222 1073,224 1080,228 1084,232 1088,236 1092,240 1095,244 1097,248 1100,252 1104,259 1107,264 1109,268 1112,272 1116,279 1120,284 1124,288 1128,292 1132,294 1137,296 1144,297 1152,296 1156,296 1164,295 1170,296 1176,298 1180,301 1184,305 1188,310 1191,316 1192,320"/><polyline points="1568,301 1560,303 1552,302 1545,300 1540,297 1536,293 1532,288 1531,284 1529,276 1530,268 1532,261 1534,256 1536,251 1539,244 1542,240 1544,235 1548,228 1550,224 1552,220 1556,214 1560,208 1564,204 1568,201 1572,199 1580,199 1584,200 1591,204 1596,208 1600,212 1603,216 1606,220 1608,224 1611,232 1612,236 1613,244 1612,252 1611,256 1608,264 1606,268 1603,272 1600,276 1596,280 1592,284 1587,288 1582,292 1577,296 1572,299 1568,301"/><polyline points="2044,305 2037,304 2034,300 2031,296 2028,290 2024,284 2022,280 2019,276 2016,270 2012,264 2010,260 2008,256 2005,248 2007,240 2011,236 2016,233 2020,231 2028,229 2032,228 2040,228 2044,229 2052,232 2056,235 2060,239 2064,244 2065,248 2067,256 2067,264 2065,272 2064,276 2060,284 2057,288 2055,292 2052,296 2048,301 2044,305"/><polyline points="213,0 208,4 204,6 196,6 191,4 187,0"/><polyline points="1182,0 1184,4 1186,12 1188,19 1189,24 1191,32 1192,37 1194,44 1196,51 1198,56 1200,62 1202,68 1204,73 1206,80 1208,85 1210,92 1211,100 1212,104 1212,112 1212,119 1211,124 1209,132 1206,136 1203,140 1196,144 1192,145 1184,145 1177,144 1172,143 1164,141 1156,140 1152,140 1144,140 1140,140 1132,141 1124,143 1118,144 1112,145 1104,145 1097,144 1092,142 1088,139 1084,133 1082,128 1080,122 1079,116 1078,108 1078,100 1078,92 1078,84 1077,76 1076,68 1075,64 1073,56 1072,52 1068,45 1065,40 1062,36 1058,32 1054,28 1048,24 1044,21 1040,19 1032,16 1028,15 1022,16 1017,20 1015,24 1012,32 1012,36 1011,44 1010,52 1009,60 1008,68 1007,72 1006,80 1004,86 1002,92 1000,96 996,102 992,108 988,112 984,116 980,119 976,121 968,123 960,122 956,119 952,115 948,109 946,104 944,100 941,92 939,88 937,80 936,76 934,68 932,62 930,56 928,48 927,44 924,37 922,32 920,28 916,20 914,16 912,12 909,4"/><polyline points="1736,124 1728,124 1724,124 1716,122 1712,120 1704,116 1700,113 1696,108 1693,104 1690,100 1688,95 1686,88 1685,80 1686,72 1688,65 1690,60 1693,56 1697,52 1704,49 1708,48 1712,48 1720,50 1724,53 1729,56 1734,60 1738,64 1742,68 1746,72 1749,76 1752,80 1756,87 1759,92 1760,96 1762,104 1760,112 1757,116 1752,120 1748,122 1740,124 1736,124"/><polyline points="656,245 648,245 644,244 637,240 633,236 630,232 628,228 625,220 624,215 623,208 623,200 623,192 624,186 625,180 626,172 628,165 629,160 632,152 633,148 636,142 639,136 641,132 644,128 648,122 652,118 656,113 660,109 664,105 668,102 672,98 676,95 681,92 688,89 692,88 700,88 704,89 709,92 713,96 716,101 718,108 719,116 720,124 719,132 718,140 716,148 715,152 713,160 712,164 709,172 708,176 705,184 703,188 700,195 698,200 696,204 692,211 689,216 686,220 683,224 680,228 676,233 672,236 667,240 660,244 656,245"/><polyline points="528,179 520,179 516,176 512,171 508,164 507,160 504,152 503,148 501,140 500,132 500,128 500,124 501,116 503,108 505,104 509,100 516,97 521,100 525,104 528,108 531,116 532,120 534,128 535,136 536,144 536,148 536,154 536,160 534,168 532,174 528,179"/><polyline points="2228,316 2220,317 2212,317 2207,316 2200,314 2195,312 2189,308 2184,304 2181,300 2178,296 2175,292 2172,286 2170,280 2168,275 2167,268 2166,260 2166,252 2167,244 2168,240 2171,232 2172,228 2176,220 2179,216 2181,212 2185,208 2190,204 2196,202 2204,204 2208,208 2211,212 2213,216 2216,221 2219,228 2221,232 2224,239 2226,244 2229,248 2232,254 2236,259 2240,264 2244,268 2248,271 2252,274 2256,276 2264,279 2272,280 2276,280 2284,282 2288,285 2292,292 2290,300 2288,304 2283,308 2276,312 2272,313 2264,314 2256,314 2248,314 2240,315 2232,316 2228,316"/><polyline points="1856,257 1848,259 1840,256 1837,252 1835,248 1832,240 1832,236 1832,230 1833,224 1836,217 1840,212 1844,210 1851,208 1854,208 1860,209 1865,212 1869,216 1872,221 1873,228 1872,236 1871,240 1868,245 1864,251 1860,255 1856,257"/><polyline points="1572,280 1564,283 1556,283 1550,280 1547,276 1546,268 1547,260 1548,256 1552,248 1554,244 1557,240 1560,235 1564,230 1568,227 1574,224 1580,223 1584,224 1589,228 1593,232 1596,240 1597,244 1596,252 1595,256 1592,262 1588,267 1584,272 1580,275 1576,278 1572,280"/><polyline points="910,324 912,319 916,314 920,311 926,308 932,306 938,304 944,303 952,301 959,300 964,299 972,297 976,295 981,292 985,288 988,282 990,276 992,269 993,264 994,256 996,248 997,244 1000,237 1004,233 1008,231 1016,229 1024,229 1032,229 1040,230 1048,230 1056,231 1060,232 1068,235 1072,237 1077,240 1082,244 1086,248 1089,252 1092,256 1096,262 1099,268 1102,272 1104,277 1108,284 1110,288 1112,292 1116,298 1120,302 1124,306 1128,309 1134,312 1140,313 1148,314 1156,313 1164,313 1172,315 1176,319 1180,324"/><polyline points="184,324 182,320 180,312 179,308 179,300 179,292 180,285 181,280 183,272 185,268 189,264 196,263 200,265 204,268 208,273 212,279 214,284 216,288 218,296 220,304 219,312 217,320 216,324"/><polyline points="989,0 992,4 995,12 996,16 998,24 999,32 999,40 999,48 999,56 999,64 997,72 996,77 994,84 992,88 988,94 984,98 980,102 976,104 968,105 964,104 958,100 954,96 952,92 948,84 947,80 944,72 943,68 941,60 940,52 939,48 938,40 937,32 936,28 935,20 935,12 936,6 939,0"/><polyline points="1129,0 1136,3 1140,4 1148,6 1156,7 1160,9 1165,12 1169,16 1172,21 1175,28 1176,32 1179,40 1180,44 1183,52 1184,56 1188,64 1189,68 1192,74 1195,80 1196,84 1199,92 1200,96 1202,104 1202,112 1200,120 1198,124 1195,128 1188,131 1180,132 1172,131 1164,130 1156,129 1148,129 1140,129 1132,130 1124,131 1116,132 1108,131 1101,128 1096,124 1094,120 1092,116 1090,108 1089,100 1088,92 1088,88 1087,80 1087,72 1085,64 1084,57 1083,52 1080,45 1078,40 1075,36 1072,31 1068,27 1064,22 1060,19 1056,16 1052,12 1046,8 1041,4 1036,0"/><polyline points="1732,105 1724,107 1716,105 1712,104 1707,100 1703,96 1700,89 1699,84 1699,76 1700,72 1704,66 1708,64 1716,63 1720,65 1725,68 1729,72 1732,76 1736,82 1738,88 1739,96 1736,102 1732,105"/><polyline points="656,232 652,232 644,229 640,225 637,220 635,216 633,208 632,204 631,196 632,188 632,184 633,176 635,168 636,163 638,156 640,152 644,144 646,140 649,136 652,132 656,127 660,123 664,120 669,116 674,112 680,109 684,107 692,105 700,106 704,109 708,116 709,120 710,128 710,136 709,144 708,152 707,156 705,164 704,168 701,176 700,180 696,188 694,192 692,197 688,204 686,208 683,212 680,216 676,221 672,224 667,228 660,231 656,232"/><polyline points="520,143 515,140 514,132 516,126 520,129 521,136 520,143"/><polyline points="2216,292 2208,294 2200,293 2196,290 2192,287 2188,282 2185,276 2184,272 2182,264 2183,256 2184,250 2187,244 2190,240 2196,237 2202,240 2206,244 2209,248 2212,253 2215,260 2217,264 2220,271 2222,276 2222,284 2220,288 2216,292"/><polyline points="1031,324 1026,320 1022,316 1018,312 1016,308 1012,300 1011,296 1010,288 1010,280 1010,272 1011,264 1013,260 1016,254 1020,249 1024,247 1032,244 1036,243 1044,243 1052,243 1059,244 1064,246 1069,248 1075,252 1080,256 1084,260 1087,264 1089,268 1092,273 1096,280 1098,284 1100,289 1103,296 1105,300 1108,306 1112,312 1115,316 1118,320 1123,324"/><polyline points="944,324 948,322 954,320 960,319 968,319 976,320 980,321 985,324"/><polyline points="1105,0 1108,5 1112,9 1116,13 1121,16 1128,20 1132,22 1136,24 1143,28 1148,32 1152,36 1156,40 1158,44 1160,48 1164,55 1166,60 1168,64 1172,72 1173,76 1176,82 1179,88 1180,92 1181,100 1180,105 1176,109 1168,112 1164,112 1156,113 1148,114 1140,115 1136,116 1128,117 1120,117 1116,116 1109,112 1106,108 1104,104 1101,96 1100,92 1099,84 1098,76 1097,68 1096,61 1095,56 1094,48 1092,41 1090,36 1088,31 1084,24 1080,20 1076,16 1072,13 1068,10 1064,7 1060,4 1055,0"/><polyline points="976,84 968,85 964,83 960,79 956,72 955,68 953,60 952,52 952,45 952,44 953,36 955,28 957,24 960,20 968,18 973,20 977,24 981,28 984,35 985,40 987,48 987,56 987,64 985,72 983,76 980,81 976,84"/><polyline points="664,216 656,218 651,216 647,212 644,207 642,200 641,192 641,184 642,176 643,168 645,164 648,156 650,152 652,148 656,143 660,139 664,135 668,132 675,128 680,126 688,125 694,128 697,132 699,140 699,148 698,156 696,164 695,168 693,176 691,180 688,187 686,192 683,196 680,201 676,207 672,211 668,214 664,216"/><polyline points="1050,324 1046,320 1042,316 1039,312 1036,308 1032,301 1030,296 1028,288 1028,284 1028,276 1029,272 1032,266 1036,261 1040,259 1048,257 1056,257 1064,259 1068,261 1073,264 1077,268 1080,272 1084,278 1087,284 1089,288 1092,296 1094,300 1096,307 1098,312 1100,318 1102,324"/></g></svg>
<svg class="r" style="left:20.0px;top:0.0px;" width="80" height="64" viewBox="0 0 80 64">
<circle cx="38.6" cy="27" r="32.3" fill="#3cc592"/>
<rect x="20" y="5" width="37" height="45" fill="#fff"/>
<path d="M49 5 L57 13 L49 13 Z" fill="#d8d8d8"/>
<rect x="24.5" y="11" width="19" height="2" fill="#c9c9c9"/>
<rect x="24.5" y="16" width="25" height="2" fill="#c9c9c9"/>
<rect x="24.5" y="21" width="16" height="2" fill="#c9c9c9"/>
<rect x="24.5" y="42.5" width="8" height="2.5" fill="#111"/>
<g transform="translate(40,44.5) rotate(-45)">
<rect x="0" y="-4" width="32" height="8" fill="#f7c744"/>
<rect x="0" y="-4" width="32" height="3" fill="#f3a93b"/>
<rect x="30" y="-4" width="7" height="8" fill="#ef5b9c"/>
<path d="M0 -4 L-6 0 L0 4 Z" fill="#f5deb3"/>
<path d="M-3 -2 L-6 0 L-3 2 Z" fill="#222"/>
</g>
</svg>
<div class="r" style="left:820.5px;top:1.5px;width:869.0px;height:51.0px;border:2px solid #dddbda;border-radius:6px;box-sizing:border-box;background:#fff"></div>
<div class="r" style="left:915.0px;top:2.0px;width:2.0px;height:50.0px;background:#dddbda"></div>
<div class="t" style="left:841.0px;top:16.2px;font-size:21px;color:#080707;">All</div>
<svg class="r" style="left:880.0px;top:20.0px;" width="20" height="14" viewBox="0 0 20 14"><path d="M1 1 L17 1 L9 13 Z" fill="#514f4d"/></svg>
<svg class="r" style="left:948.0px;top:15.0px;" width="26" height="24" viewBox="0 0 26 24"><circle cx="10" cy="10" r="7.5" fill="none" stroke="#a19f9c" stroke-width="2.6"/><path d="M15.5 15.5 L22 22" stroke="#a19f9c" stroke-width="3" stroke-linecap="round"/></svg>
<div class="t" style="left:1000.0px;top:15.5px;font-size:21.8px;color:#3e3e3c;">Search Applications and more...</div>
<div class="r" style="left:2170.0px;top:7.5px;width:66.0px;height:39.5px;border:2px solid #8d8b88;border-radius:6px;box-sizing:border-box"></div>
<div class="r" style="left:2206.3px;top:8.0px;width:3.5px;height:38.5px;background:#8d8b88"></div>
<svg class="r" style="left:2175.0px;top:15.0px;" width="30" height="26" viewBox="0 0 30 26"><path d="M14 1.3 L17.3 10.3 L26.5 10.4 L19.2 16.3 L22 25.2 L14 19.9 L6 25.2 L8.8 16.3 L1.5 10.4 L10.7 10.3 Z" fill="#8d8b88"/></svg>
<svg class="r" style="left:2214.0px;top:23.0px;" width="17" height="10" viewBox="0 0 17 10"><path d="M1.5 1 L15.5 1 L8.5 9 Z" fill="#8d8b88"/></svg>
<svg class="r" style="left:2262.5px;top:8.5px;" width="33" height="33" viewBox="0 0 33 33"><rect x="0.5" y="0.5" width="32" height="32" rx="6" fill="#8d8b88"/><rect x="14.7" y="6.7" width="3.6" height="22.3" fill="#fff"/><rect x="6" y="16.1" width="21" height="3.5" fill="#fff"/></svg>
<svg class="r" style="left:2315.0px;top:11.0px;" width="26" height="33" viewBox="0 0 26 33"><path d="M3.5 9.5 C4 4.5 7.5 2 12.5 2 C18 2 21.5 5.5 21.5 10 C21.5 14.5 18 16 15.5 18 C13.5 19.5 13 21 13 24" fill="none" stroke="#8d8b88" stroke-width="4.2"/><rect x="10.5" y="27" width="5" height="4.6" fill="#8d8b88"/></svg>
<svg class="r" style="left:2362.0px;top:11.0px;" width="32" height="33" viewBox="0 0 32 33"><g transform="translate(16,16.3)" fill="#8d8b88"><circle cx="0" cy="-12" r="3.2" transform="rotate(0)"/><circle cx="0" cy="-12" r="3.2" transform="rotate(60)"/><circle cx="0" cy="-12" r="3.2" transform="rotate(120)"/><circle cx="0" cy="-12" r="3.2" transform="rotate(180)"/><circle cx="0" cy="-12" r="3.2" transform="rotate(240)"/><circle cx="0" cy="-12" r="3.2" transform="rotate(300)"/><circle r="11.3"/><circle r="7" fill="#fff"/><path d="M1.8 -5 L-2.8 1.2 L0 1.2 L-1.6 5.2 L3 -1 L0.2 -1 Z" fill="#8d8b88"/></g></svg>
<svg class="r" style="left:2414.0px;top:10.0px;" width="33" height="34" viewBox="0 0 33 34"><path d="M16.5 1.5 C22.5 1.5 26 6 26 12.5 L26 21.5 C26 23.5 28 24 31 24.5 L31.5 26 L1.5 26 L2 24.5 C5 24 7 23.5 7 21.5 L7 12.5 C7 6 10.5 1.5 16.5 1.5 Z" fill="#8d8b88"/><path d="M12 28 L21 28 L16.5 32.2 Z" fill="#8d8b88"/></svg>
<svg class="r" style="left:2470.0px;top:-8.0px;" width="64" height="62" viewBox="0 0 64 62"><defs><clipPath id="av"><circle cx="31.7" cy="31" r="26.6"/></clipPath>
<radialGradient id="fg" cx="0.5" cy="0.45" r="0.6"><stop offset="0" stop-color="#f3cfb0"/><stop offset="1" stop-color="#d9a582"/></radialGradient></defs>
<circle cx="31.7" cy="31" r="27.6" fill="#fbfcfd"/>
<g clip-path="url(#av)">
<path d="M4 64 C8 50 18 46 31.7 46 C45 46 55 50 59 64 Z" fill="#c6dcf0"/>
<path d="M26 38 L37 38 L38 47 L32 52 L25 47 Z" fill="#e1b48f"/>
<ellipse cx="31.5" cy="27" rx="11.2" ry="14.5" fill="url(#fg)"/>
<path d="M19.5 24 C18.5 12 23 8.5 31.5 8.5 C40 8.5 44.5 12 43.5 24 C42.5 17 40 15.5 31.5 15.5 C23 15.5 20.5 17 19.5 24 Z" fill="#3a2418"/>
<path d="M25 25 L29 25 M34 25 L38 25" stroke="#a77658" stroke-width="1.2" opacity="0.7"/>
<path d="M27 34 C29.5 35.5 33.5 35.5 36 34" stroke="#b77a66" stroke-width="1" fill="none" opacity="0.7"/>
</g>
<circle cx="31.7" cy="31" r="27" fill="none" stroke="#7d7d7d" stroke-width="1.8"/></svg>
<svg class="r" style="left:40.0px;top:79.0px;" width="38" height="38" viewBox="0 0 38 38"><circle cx="4.5" cy="4.5" r="3.9" fill="#706e6b"/><circle cx="4.5" cy="17" r="3.9" fill="#706e6b"/><circle cx="4.5" cy="31" r="3.9" fill="#706e6b"/><circle cx="17" cy="4.5" r="3.9" fill="#706e6b"/><circle cx="17" cy="17" r="3.9" fill="#706e6b"/><circle cx="17" cy="31" r="3.9" fill="#706e6b"/><circle cx="30.5" cy="4.5" r="3.9" fill="#706e6b"/><circle cx="30.5" cy="17" r="3.9" fill="#706e6b"/><circle cx="30.5" cy="31" r="3.9" fill="#706e6b"/></svg>
<div class="t" style="left:110.0px;top:82.2px;font-size:30.2px;color:#080707;">Grants Management</div>
<div class="r" style="left:524.0px;top:68.0px;width:204.0px;height:60.5px;background:#eaf1fb"></div>
<div class="r" style="left:524.0px;top:68.0px;width:204.0px;height:4.0px;background:#0b5fd0"></div>
<div class="t" style="left:446.0px;top:86.0px;font-size:22px;color:#080707;">Home</div>
<div class="t" style="left:544.5px;top:86.0px;font-size:22px;color:#080707;">Applications</div>
<svg class="r" style="left:685.0px;top:92.0px;" width="22" height="13" viewBox="0 0 22 13"><path d="M2 2 L11 11 L20 2" fill="none" stroke="#514f4d" stroke-width="2.6"/></svg>
<div class="t" style="left:746.5px;top:86.0px;font-size:22px;color:#080707;">Projects</div>
<svg class="r" style="left:844.5px;top:92.0px;" width="22" height="13" viewBox="0 0 22 13"><path d="M2 2 L11 11 L20 2" fill="none" stroke="#514f4d" stroke-width="2.6"/></svg>
<div class="t" style="left:904.5px;top:86.0px;font-size:22px;color:#080707;">Grants</div>
<svg class="r" style="left:989.0px;top:92.0px;" width="22" height="13" viewBox="0 0 22 13"><path d="M2 2 L11 11 L20 2" fill="none" stroke="#514f4d" stroke-width="2.6"/></svg>
<div class="t" style="left:1050.0px;top:86.0px;font-size:22px;color:#080707;">Accounts</div>
<svg class="r" style="left:1159.5px;top:92.0px;" width="22" height="13" viewBox="0 0 22 13"><path d="M2 2 L11 11 L20 2" fill="none" stroke="#514f4d" stroke-width="2.6"/></svg>
<div class="t" style="left:1221.0px;top:86.0px;font-size:22px;color:#080707;">Contacts</div>
<svg class="r" style="left:1326.0px;top:92.0px;" width="22" height="13" viewBox="0 0 22 13"><path d="M2 2 L11 11 L20 2" fill="none" stroke="#514f4d" stroke-width="2.6"/></svg>
<div class="t" style="left:1388.0px;top:86.0px;font-size:22px;color:#080707;">Reports</div>
<svg class="r" style="left:1482.5px;top:92.0px;" width="22" height="13" viewBox="0 0 22 13"><path d="M2 2 L11 11 L20 2" fill="none" stroke="#514f4d" stroke-width="2.6"/></svg>
<div class="t" style="left:1544.0px;top:86.0px;font-size:22px;color:#080707;">Dashboards</div>
<svg class="r" style="left:1680.0px;top:92.0px;" width="22" height="13" viewBox="0 0 22 13"><path d="M2 2 L11 11 L20 2" fill="none" stroke="#514f4d" stroke-width="2.6"/></svg>
<div class="t" style="left:1741.0px;top:86.0px;font-size:22px;color:#080707;">Analytics</div>
<div class="t" style="left:1866.5px;top:86.0px;font-size:22px;color:#080707;">Campaigns</div>
<svg class="r" style="left:1996.0px;top:92.0px;" width="22" height="13" viewBox="0 0 22 13"><path d="M2 2 L11 11 L20 2" fill="none" stroke="#514f4d" stroke-width="2.6"/></svg>
<div class="t" style="left:2057.5px;top:86.0px;font-size:22px;color:#080707;">Equipment</div>
<svg class="r" style="left:2185.0px;top:92.0px;" width="22" height="13" viewBox="0 0 22 13"><path d="M2 2 L11 11 L20 2" fill="none" stroke="#514f4d" stroke-width="2.6"/></svg>
<svg class="r" style="left:2509.0px;top:87.0px;" width="25" height="24" viewBox="0 0 25 24"><path d="M3 17 L16 4 L21 9 L8 22 L2 23 Z" fill="#706e6b"/><path d="M17.5 2.5 L19.5 0.5 L24.5 5.5 L22.5 7.5 Z" fill="#706e6b"/></svg>
<div class="r" style="left:20.5px;top:151.5px;width:2518.5px;height:180.0px;background:#fff;border-radius:5px;box-shadow:0 0 0 1px rgba(200,210,222,0.6),0 2px 3px rgba(0,0,0,0.10);overflow:hidden"></div>
<div class="r" style="left:20.5px;top:151.5px;width:2518.5px;height:80.5px;background:#f3f2f2;border-radius:5px 5px 0 0"></div>
<svg class="r" style="left:42.5px;top:164.0px;" width="51" height="51" viewBox="0 0 51 51"><rect x="0" y="0" width="51" height="51" rx="5" fill="#f7a94b"/><g fill="#fff"><circle cx="11" cy="19" r="3"/><circle cx="25.5" cy="12.5" r="3"/><circle cx="40" cy="19" r="3"/><path d="M11 21 L17 27 L25.5 15 L34 27 L40 21 L37 34 L14 34 Z"/><rect x="14" y="36.5" width="23" height="3.5"/></g></svg>
<div class="t" style="left:113.0px;top:161.4px;font-size:22.6px;color:#080707;">Application</div>
<div class="t" style="left:113.0px;top:187.4px;font-size:29.3px;color:#080707;font-weight:700;">CBDG Application - Medina County</div>
<div class="r" style="left:1628.0px;top:166.0px;width:152.0px;height:51.0px;background:#fff;border:2px solid #dddbda;border-radius:6px;box-sizing:border-box"></div>
<svg class="r" style="left:1655.0px;top:178.0px;" width="22" height="26" viewBox="0 0 22 26"><rect x="9.5" y="2" width="3" height="22" fill="#1d3f78"/><rect x="0" y="11.5" width="22" height="3" fill="#1d3f78"/></svg>
<div class="t" style="left:1691.5px;top:179.9px;font-size:21.4px;color:#1d3f78;">Follow</div>
<div class="r" style="left:1788.5px;top:166.0px;width:727.5px;height:51.0px;background:#fff;border:2px solid #dddbda;border-radius:6px;box-sizing:border-box"></div>
<div class="r" style="left:1878.5px;top:167.0px;width:2.0px;height:49.0px;background:#dddbda"></div>
<div class="r" style="left:2216.5px;top:167.0px;width:2.0px;height:49.0px;background:#dddbda"></div>
<div class="r" style="left:2466.0px;top:167.0px;width:2.0px;height:49.0px;background:#dddbda"></div>
<div class="t" style="left:1816.0px;top:180.5px;font-size:20.7px;color:#1d3f78;">Edit</div>
<div class="t" style="left:1907.5px;top:179.9px;font-size:21.4px;color:#1d3f78;">New Budget Change Request</div>
<div class="t" style="left:2244.5px;top:179.1px;font-size:22.3px;color:#1d3f78;">Submit for Approval</div>
<svg class="r" style="left:2483.0px;top:186.0px;" width="22" height="14" viewBox="0 0 22 14"><path d="M1 1 L21 1 L11 13 Z" fill="#706e6b"/></svg>
<div class="t" style="left:48.5px;top:255.7px;font-size:20.4px;color:#3e3e3c;">Account Name</div>
<svg class="r" style="left:46.0px;top:280.0px;" width="36" height="38" viewBox="0 0 36 38"><defs><linearGradient id="bg0" gradientUnits="userSpaceOnUse" x1="4.5" y1="33" x2="18.4" y2="3.7"><stop offset="0" stop-color="#1b55d6"/><stop offset="0.55" stop-color="#4f9af2"/><stop offset="1" stop-color="#d9ecff" stop-opacity="0.3"/></linearGradient><linearGradient id="bg1" gradientUnits="userSpaceOnUse" x1="4.5" y1="33" x2="25.8" y2="18.5"><stop offset="0" stop-color="#1b55d6"/><stop offset="0.55" stop-color="#4f9af2"/><stop offset="1" stop-color="#d9ecff" stop-opacity="0.3"/></linearGradient><linearGradient id="bg2" gradientUnits="userSpaceOnUse" x1="4.5" y1="33" x2="31" y2="33.5"><stop offset="0" stop-color="#1b55d6"/><stop offset="0.55" stop-color="#4f9af2"/><stop offset="1" stop-color="#d9ecff" stop-opacity="0.3"/></linearGradient></defs><path d="M4.5 33 L18.4 3.7 L25.8 18.5 Z" fill="#8cc4ff" opacity="0.22"/><path d="M4.5 33 L25.8 18.5 L31 33.5 Z" fill="#8cc4ff" opacity="0.18"/><path d="M5.58 33.51 L21.29 5.07 L17.53 3.29 L3.42 32.49 Z" fill="url(#bg0)"/><path d="M5.18 33.99 L27.60 21.15 L25.26 17.71 L3.82 32.01 Z" fill="url(#bg1)"/><path d="M4.48 34.20 L30.94 36.70 L31.02 32.54 L4.52 31.80 Z" fill="url(#bg2)"/></svg>
<div class="t" style="left:87.5px;top:284.6px;font-size:23.7px;color:#006dcc;">Medina Coun...</div>
<div class="ul" style="left:87.5px;top:308px;width:161px"></div>
<div class="t" style="left:365.0px;top:255.7px;font-size:20.4px;color:#3e3e3c;">Fund</div>
<div class="t" style="left:365.0px;top:284.5px;font-size:23.9px;color:#006dcc;">Community Development Block Grant</div>
<div class="ul" style="left:365px;top:308px;width:400px"></div>
<div class="t" style="left:882.0px;top:255.7px;font-size:20.4px;color:#3e3e3c;">Type of Application</div>
<div class="t" style="left:882.0px;top:284.8px;font-size:23.5px;color:#080707;">New</div>
<div class="r" style="left:20.5px;top:353.0px;width:2518.5px;height:78.0px;background:#fff;border-radius:5px;box-shadow:0 0 0 1px #cfd7e1,0 2px 3px rgba(0,0,0,0.10)"></div>
<svg class="r" style="left:0.0px;top:0.0px;" width="2559" height="1434" viewBox="0 0 2559 1434"><path d="M66.6 365.6 L385 365.6 L399.5 391.6 L385 417.6 L66.6 417.6 A26 26 0 0 1 66.6 365.6 Z" fill="#4bca81"/><path d="M392 365.6 L733.5 365.6 L748.0 391.6 L733.5 417.6 L392 417.6 L406.5 391.6 Z" fill="#0b61b5"/><path d="M740.5 365.6 L1082.0 365.6 L1096.5 391.6 L1082.0 417.6 L740.5 417.6 L755.0 391.6 Z" fill="#ecebea"/><path d="M1089.0 365.6 L1430.5 365.6 L1445.0 391.6 L1430.5 417.6 L1089.0 417.6 L1103.5 391.6 Z" fill="#ecebea"/><path d="M1437.5 365.6 L1779.0 365.6 L1793.5 391.6 L1779.0 417.6 L1437.5 417.6 L1452.0 391.6 Z" fill="#ecebea"/><path d="M1786.0 365.6 L2116.6 365.6 A26 26 0 0 1 2116.6 417.6 L1786.0 417.6 L1800.5 391.6 Z" fill="#ecebea"/></svg>
<svg class="r" style="left:209.0px;top:385.0px;" width="24" height="17" viewBox="0 0 24 17"><path d="M2 8 L8.5 14 L21 2.5" fill="none" stroke="#fff" stroke-width="2.4"/></svg>
<div class="t" style="left:550.5px;top:381.7px;font-size:21.4px;color:#fff;font-weight:700;">New</div>
<div class="t" style="left:890.0px;top:382.4px;font-size:20.5px;color:#080707;">Assign</div>
<div class="t" style="left:1193.5px;top:381.9px;font-size:21.2px;color:#080707;">External Review</div>
<div class="t" style="left:1543.5px;top:381.9px;font-size:21.2px;color:#080707;">Internal Review</div>
<div class="t" style="left:1930.5px;top:381.9px;font-size:21.2px;color:#080707;">Closed</div>
<div class="r" style="left:2183.5px;top:366.0px;width:336.0px;height:52.0px;background:#1b5297;border-radius:6px"></div>
<svg class="r" style="left:2215.0px;top:384.0px;" width="24" height="18" viewBox="0 0 24 18"><path d="M2 8.5 L9 15 L22.5 2" fill="none" stroke="#fff" stroke-width="2.6"/></svg>
<div class="t" style="left:2251.0px;top:380.7px;font-size:20.4px;color:#fff;font-weight:700;">Mark Stage as Complete</div>
<div class="r" style="left:20.5px;top:453.5px;width:1678.5px;height:1046.5px;background:#fff;border-radius:5px;box-shadow:0 0 0 1px #cfd7e1,0 2px 3px rgba(0,0,0,0.10)"></div>
<div class="r" style="left:1720.5px;top:453.5px;width:818.5px;height:1046.5px;background:#fff;border-radius:5px;box-shadow:0 0 0 1px #cfd7e1,0 2px 3px rgba(0,0,0,0.10)"></div>
<div class="r" style="left:40.5px;top:509.0px;width:1639.5px;height:2.0px;background:#dddbda"></div>
<div class="r" style="left:40.5px;top:507.0px;width:137.5px;height:4.0px;background:#0a62c4"></div>
<div class="t" style="left:66.0px;top:470.9px;font-size:25.9px;color:#080707;font-weight:700;">Details</div>
<div class="t" style="left:223.0px;top:469.8px;font-size:27.2px;color:#3e3e3c;">Activity</div>
<div class="t" style="left:382.0px;top:470.1px;font-size:26.8px;color:#3e3e3c;">Chatter</div>
<div class="r" style="left:1740.5px;top:509.0px;width:779.5px;height:2.0px;background:#dddbda"></div>
<div class="r" style="left:1740.5px;top:507.0px;width:145.5px;height:4.0px;background:#0a62c4"></div>
<div class="t" style="left:1766.5px;top:470.8px;font-size:25.7px;color:#080707;font-weight:700;">Related</div>
<div class="t" style="left:1933.0px;top:470.2px;font-size:26.5px;color:#3e3e3c;">Analytics</div>
<div class="r" style="left:42.5px;top:527.2px;width:1635.5px;height:50.0px;background:#f3f2f2;border-radius:5px"></div>
<svg class="r" style="left:57.0px;top:544.2px;" width="22" height="15" viewBox="0 0 22 15"><path d="M2.5 2.5 L11 11 L19.5 2.5" fill="none" stroke="#080707" stroke-width="3"/></svg>
<div class="t" style="left:94.0px;top:539.2px;font-size:24.8px;color:#080707;">Application Information</div>
<div class="t" style="left:66.5px;top:606.0px;font-size:20.6px;color:#3e3e3c;">Application Name</div>
<div class="t" style="left:315.5px;top:605.8px;font-size:23.6px;color:#080707;">CBDG Application - Medina County</div>
<svg class="r" style="left:798.0px;top:606.4px;" width="22" height="22" viewBox="0 0 22 22"><path d="M2 16 L14 4 L18 8 L6 20 L1 21 Z" fill="#e2e1e0"/><path d="M15.5 2.5 L17.5 0.5 L21.5 4.5 L19.5 6.5 Z" fill="#e2e1e0"/></svg>
<div class="r" style="left:60.5px;top:644.4px;width:767.5px;height:2.0px;background:#dddbda"></div>
<div class="t" style="left:66.5px;top:660.2px;font-size:20.6px;color:#3e3e3c;">Type of Application</div>
<div class="t" style="left:315.5px;top:660.0px;font-size:23.6px;color:#080707;">New</div>
<svg class="r" style="left:798.0px;top:660.6px;" width="22" height="22" viewBox="0 0 22 22"><path d="M2 16 L14 4 L18 8 L6 20 L1 21 Z" fill="#e2e1e0"/><path d="M15.5 2.5 L17.5 0.5 L21.5 4.5 L19.5 6.5 Z" fill="#e2e1e0"/></svg>
<div class="r" style="left:60.5px;top:693.0px;width:767.5px;height:2.0px;background:#dddbda"></div>
<div class="t" style="left:66.5px;top:708.8px;font-size:20.6px;color:#3e3e3c;">Fund</div>
<div class="t" style="left:315.5px;top:707.4px;font-size:23.8px;color:#006dcc;">Community Development Block Grant</div>
<svg class="r" style="left:798.0px;top:709.2px;" width="22" height="22" viewBox="0 0 22 22"><path d="M2 16 L14 4 L18 8 L6 20 L1 21 Z" fill="#e2e1e0"/><path d="M15.5 2.5 L17.5 0.5 L21.5 4.5 L19.5 6.5 Z" fill="#e2e1e0"/></svg>
<div class="r" style="left:60.5px;top:741.6px;width:767.5px;height:2.0px;background:#dddbda"></div>
<div class="t" style="left:66.5px;top:757.0px;font-size:20.6px;color:#3e3e3c;">Name of Federal State</div>
<div class="t" style="left:66.5px;top:783.3px;font-size:20.6px;color:#3e3e3c;">Agency</div>
<svg class="r" style="left:798.0px;top:757.4px;" width="22" height="22" viewBox="0 0 22 22"><path d="M2 16 L14 4 L18 8 L6 20 L1 21 Z" fill="#e2e1e0"/><path d="M15.5 2.5 L17.5 0.5 L21.5 4.5 L19.5 6.5 Z" fill="#e2e1e0"/></svg>
<div class="r" style="left:60.5px;top:809.0px;width:767.5px;height:2.0px;background:#dddbda"></div>
<div class="t" style="left:66.5px;top:824.3px;font-size:20.6px;color:#3e3e3c;">Application Name Type</div>
<div class="t" style="left:315.5px;top:824.2px;font-size:23.6px;color:#080707;">Community Renewal</div>
<svg class="r" style="left:798.0px;top:824.7px;" width="22" height="22" viewBox="0 0 22 22"><path d="M2 16 L14 4 L18 8 L6 20 L1 21 Z" fill="#e2e1e0"/><path d="M15.5 2.5 L17.5 0.5 L21.5 4.5 L19.5 6.5 Z" fill="#e2e1e0"/></svg>
<div class="r" style="left:60.5px;top:875.2px;width:767.5px;height:2.0px;background:#dddbda"></div>
<div class="ul" style="left:315.5px;top:731px;width:401px"></div>
<div class="t" style="left:899.0px;top:604.8px;font-size:20.6px;color:#3e3e3c;">Application Owner</div>
<svg class="r" style="left:1630.0px;top:605.2px;" width="22" height="22" viewBox="0 0 22 22"><path d="M2 16 L14 4 L18 8 L6 20 L1 21 Z" fill="#e2e1e0"/><path d="M15.5 2.5 L17.5 0.5 L21.5 4.5 L19.5 6.5 Z" fill="#e2e1e0"/></svg>
<div class="r" style="left:892.5px;top:644.4px;width:767.0px;height:2.0px;background:#dddbda"></div>
<div class="t" style="left:899.0px;top:659.6px;font-size:20.6px;color:#3e3e3c;">Close Date</div>
<div class="t" style="left:1148.5px;top:659.4px;font-size:23.6px;color:#080707;letter-spacing:1.54px;">12/18/2019</div>
<svg class="r" style="left:1630.0px;top:660.0px;" width="22" height="22" viewBox="0 0 22 22"><path d="M2 16 L14 4 L18 8 L6 20 L1 21 Z" fill="#e2e1e0"/><path d="M15.5 2.5 L17.5 0.5 L21.5 4.5 L19.5 6.5 Z" fill="#e2e1e0"/></svg>
<div class="r" style="left:892.5px;top:693.0px;width:767.0px;height:2.0px;background:#dddbda"></div>
<div class="t" style="left:899.0px;top:707.7px;font-size:20.6px;color:#3e3e3c;">Stage</div>
<div class="t" style="left:1148.5px;top:707.6px;font-size:23.6px;color:#080707;">New</div>
<svg class="r" style="left:1630.0px;top:708.1px;" width="22" height="22" viewBox="0 0 22 22"><path d="M2 16 L14 4 L18 8 L6 20 L1 21 Z" fill="#e2e1e0"/><path d="M15.5 2.5 L17.5 0.5 L21.5 4.5 L19.5 6.5 Z" fill="#e2e1e0"/></svg>
<div class="r" style="left:892.5px;top:741.7px;width:767.0px;height:2.0px;background:#dddbda"></div>
<div class="t" style="left:899.0px;top:756.9px;font-size:20.6px;color:#3e3e3c;">Amount of Funds Re-</div>
<div class="t" style="left:899.0px;top:783.2px;font-size:20.6px;color:#3e3e3c;">quested</div>
<div class="t" style="left:1148.5px;top:756.8px;font-size:23.6px;color:#080707;letter-spacing:0.42px;">$50,000.00</div>
<div class="r" style="left:892.5px;top:808.0px;width:767.0px;height:2.0px;background:#dddbda"></div>
<div class="t" style="left:899.0px;top:823.3px;font-size:20.6px;color:#3e3e3c;">Amount of Other Funds</div>
<div class="t" style="left:899.0px;top:849.6px;font-size:20.6px;color:#3e3e3c;">Requested</div>
<div class="t" style="left:1148.5px;top:823.2px;font-size:23.6px;color:#080707;letter-spacing:0.42px;">$20,000.00</div>
<div class="r" style="left:892.5px;top:874.6px;width:767.0px;height:2.0px;background:#dddbda"></div>
<svg class="r" style="left:979.0px;top:783.0px;" width="21" height="21" viewBox="0 0 21 21"><circle cx="10.5" cy="10.5" r="10.5" fill="#b0adab"/><rect x="9" y="9" width="3" height="7" fill="#fff"/><circle cx="10.5" cy="6" r="1.7" fill="#fff"/></svg>
<svg class="r" style="left:1002.5px;top:850.0px;" width="21" height="21" viewBox="0 0 21 21"><circle cx="10.5" cy="10.5" r="10.5" fill="#b0adab"/><rect x="9" y="9" width="3" height="7" fill="#fff"/><circle cx="10.5" cy="6" r="1.7" fill="#fff"/></svg>
<svg class="r" style="left:1150.0px;top:602.0px;" width="36" height="40" viewBox="0 0 36 40"><defs><clipPath id="ow"><path d="M0 0 H36 V24 C36 34 28 40 18 40 C8 40 0 34 0 24 Z"/></clipPath></defs>
<g clip-path="url(#ow)">
<path d="M1 40 C3 30 10 27.5 18 27.5 C26 27.5 33 30 35 40 Z" fill="#55575d"/>
<path d="M14.5 27 L18 33 L21.5 27 Z" fill="#e9e6e6"/>
<ellipse cx="17.6" cy="14.5" rx="6.8" ry="9.5" fill="#d2a184"/>
<path d="M10.5 14 C10 5 13 2 17.6 2 C22.5 2 25.5 5 25 14 C24 9 22 7.5 17.6 7.5 C13.5 7.5 11.5 9 10.5 14 Z" fill="#3d2a20"/>
</g></svg>
<div class="t" style="left:1193.0px;top:604.1px;font-size:23.8px;color:#006dcc;">Paul Partner</div>
<div class="ul" style="left:1193px;top:628px;width:128px"></div>
<svg class="r" style="left:1629.0px;top:606.0px;" width="24" height="22" viewBox="0 0 24 22"><circle cx="11" cy="7" r="4.5" fill="#dddbda"/><path d="M3 20 C3 14 6 12 11 12 C16 12 19 14 19 20 Z" fill="#dddbda"/><path d="M15 3 L22 3 L22 10" fill="none" stroke="#dddbda" stroke-width="2"/></svg>
<div class="r" style="left:42.5px;top:893.8px;width:1635.5px;height:50.0px;background:#f3f2f2;border-radius:5px"></div>
<svg class="r" style="left:57.0px;top:910.8px;" width="22" height="15" viewBox="0 0 22 15"><path d="M2.5 2.5 L11 11 L19.5 2.5" fill="none" stroke="#080707" stroke-width="3"/></svg>
<div class="t" style="left:94.0px;top:905.8px;font-size:24.8px;color:#080707;">Applicant</div>
<div class="t" style="left:66.5px;top:972.0px;font-size:20.6px;color:#3e3e3c;">Type of Applicant</div>
<div class="t" style="left:315.5px;top:972.5px;font-size:23.6px;color:#080707;">Municipal</div>
<svg class="r" style="left:798.0px;top:972.4px;" width="22" height="22" viewBox="0 0 22 22"><path d="M2 16 L14 4 L18 8 L6 20 L1 21 Z" fill="#e2e1e0"/><path d="M15.5 2.5 L17.5 0.5 L21.5 4.5 L19.5 6.5 Z" fill="#e2e1e0"/></svg>
<div class="r" style="left:60.5px;top:1004.7px;width:767.5px;height:2.0px;background:#dddbda"></div>
<div class="t" style="left:66.5px;top:1018.6px;font-size:20.6px;color:#3e3e3c;">Account Name</div>
<div class="t" style="left:315.5px;top:1018.6px;font-size:23.8px;color:#006dcc;">Medina County</div>
<svg class="r" style="left:798.0px;top:1019.0px;" width="22" height="22" viewBox="0 0 22 22"><path d="M2 16 L14 4 L18 8 L6 20 L1 21 Z" fill="#e2e1e0"/><path d="M15.5 2.5 L17.5 0.5 L21.5 4.5 L19.5 6.5 Z" fill="#e2e1e0"/></svg>
<div class="r" style="left:60.5px;top:1053.3px;width:767.5px;height:2.0px;background:#dddbda"></div>
<div class="t" style="left:66.5px;top:1068.0px;font-size:20.6px;color:#3e3e3c;">DUNS Number</div>
<div class="t" style="left:315.5px;top:1068.1px;font-size:23.6px;color:#080707;letter-spacing:0.59px;">4534235465</div>
<svg class="r" style="left:798.0px;top:1068.4px;" width="22" height="22" viewBox="0 0 22 22"><path d="M2 16 L14 4 L18 8 L6 20 L1 21 Z" fill="#e2e1e0"/><path d="M15.5 2.5 L17.5 0.5 L21.5 4.5 L19.5 6.5 Z" fill="#e2e1e0"/></svg>
<div class="r" style="left:60.5px;top:1102.2px;width:767.5px;height:2.0px;background:#dddbda"></div>
<div class="t" style="left:66.5px;top:1117.3px;font-size:20.6px;color:#3e3e3c;">Employer Identification</div>
<div class="t" style="left:66.5px;top:1143.6px;font-size:20.6px;color:#3e3e3c;">Number (EIN)</div>
<div class="t" style="left:315.5px;top:1116.6px;font-size:23.6px;color:#080707;letter-spacing:0.65px;">897856453</div>
<svg class="r" style="left:798.0px;top:1117.7px;" width="22" height="22" viewBox="0 0 22 22"><path d="M2 16 L14 4 L18 8 L6 20 L1 21 Z" fill="#e2e1e0"/><path d="M15.5 2.5 L17.5 0.5 L21.5 4.5 L19.5 6.5 Z" fill="#e2e1e0"/></svg>
<div class="r" style="left:60.5px;top:1168.6px;width:767.5px;height:2.0px;background:#dddbda"></div>
<div class="ul" style="left:315.5px;top:1042px;width:161px"></div>
<div class="t" style="left:899.0px;top:972.0px;font-size:20.6px;color:#3e3e3c;">Primary Contact</div>
<svg class="r" style="left:1630.0px;top:972.4px;" width="22" height="22" viewBox="0 0 22 22"><path d="M2 16 L14 4 L18 8 L6 20 L1 21 Z" fill="#e2e1e0"/><path d="M15.5 2.5 L17.5 0.5 L21.5 4.5 L19.5 6.5 Z" fill="#e2e1e0"/></svg>
<div class="r" style="left:892.5px;top:1004.7px;width:767.0px;height:2.0px;background:#dddbda"></div>
<div class="t" style="left:899.0px;top:1018.6px;font-size:20.6px;color:#3e3e3c;">Contact Name</div>
<div class="t" style="left:1148.5px;top:1019.5px;font-size:23.6px;color:#080707;">Paul Partner</div>
<svg class="r" style="left:1630.0px;top:1019.0px;" width="22" height="22" viewBox="0 0 22 22"><path d="M2 16 L14 4 L18 8 L6 20 L1 21 Z" fill="#e2e1e0"/><path d="M15.5 2.5 L17.5 0.5 L21.5 4.5 L19.5 6.5 Z" fill="#e2e1e0"/></svg>
<div class="r" style="left:892.5px;top:1053.3px;width:767.0px;height:2.0px;background:#dddbda"></div>
<div class="t" style="left:899.0px;top:1068.0px;font-size:20.6px;color:#3e3e3c;">Contact Email</div>
<div class="t" style="left:1148.5px;top:1067.2px;font-size:23.8px;color:#006dcc;">ppartner@example.com</div>
<svg class="r" style="left:1630.0px;top:1068.4px;" width="22" height="22" viewBox="0 0 22 22"><path d="M2 16 L14 4 L18 8 L6 20 L1 21 Z" fill="#e2e1e0"/><path d="M15.5 2.5 L17.5 0.5 L21.5 4.5 L19.5 6.5 Z" fill="#e2e1e0"/></svg>
<div class="r" style="left:892.5px;top:1102.2px;width:767.0px;height:2.0px;background:#dddbda"></div>
<div class="t" style="left:899.0px;top:1117.3px;font-size:20.6px;color:#3e3e3c;">Contact Phone</div>
<svg class="r" style="left:1630.0px;top:1117.7px;" width="22" height="22" viewBox="0 0 22 22"><path d="M2 16 L14 4 L18 8 L6 20 L1 21 Z" fill="#e2e1e0"/><path d="M15.5 2.5 L17.5 0.5 L21.5 4.5 L19.5 6.5 Z" fill="#e2e1e0"/></svg>
<div class="r" style="left:892.5px;top:1168.6px;width:767.0px;height:2.0px;background:#dddbda"></div>
<div class="r" style="left:42.5px;top:1187.8px;width:1635.5px;height:50.0px;background:#f3f2f2;border-radius:5px"></div>
<svg class="r" style="left:57.0px;top:1204.8px;" width="22" height="15" viewBox="0 0 22 15"><path d="M2.5 2.5 L11 11 L19.5 2.5" fill="none" stroke="#080707" stroke-width="3"/></svg>
<div class="t" style="left:94.0px;top:1199.8px;font-size:24.8px;color:#080707;">Scoring</div>
<div class="t" style="left:66.5px;top:1265.2px;font-size:20.6px;color:#3e3e3c;">Score Total</div>
<div class="t" style="left:315.5px;top:1264.2px;font-size:23.6px;color:#080707;">0</div>
<div class="r" style="left:60.5px;top:1298.0px;width:767.5px;height:2.0px;background:#dddbda"></div>
<div class="t" style="left:66.5px;top:1314.6px;font-size:20.6px;color:#3e3e3c;">Average Score</div>
<div class="t" style="left:315.5px;top:1313.3px;font-size:23.6px;color:#080707;letter-spacing:0.35px;">75</div>
<div class="r" style="left:60.5px;top:1346.9px;width:767.5px;height:2.0px;background:#dddbda"></div>
<div class="t" style="left:899.0px;top:1265.2px;font-size:20.6px;color:#3e3e3c;">State Score</div>
<div class="t" style="left:1148.5px;top:1264.2px;font-size:23.6px;color:#080707;">0</div>
<div class="r" style="left:892.5px;top:1298.0px;width:767.0px;height:2.0px;background:#dddbda"></div>
<div class="r" style="left:42.5px;top:1365.0px;width:1635.5px;height:50.0px;background:#f3f2f2;border-radius:5px"></div>
<svg class="r" style="left:57.0px;top:1382.0px;" width="22" height="15" viewBox="0 0 22 15"><path d="M2.5 2.5 L11 11 L19.5 2.5" fill="none" stroke="#080707" stroke-width="3"/></svg>
<div class="t" style="left:94.0px;top:1377.0px;font-size:24.8px;color:#080707;">Project Information</div>
<div class="r" style="left:1741.0px;top:525.0px;width:778.0px;height:82.5px;background:#fff;border:2px solid #dddbda;border-top:5px solid #a8a8a8;border-radius:5px;box-sizing:border-box"></div>
<div class="r" style="left:2467.0px;top:544.0px;width:32.5px;height:31.5px;background:#fff;border:2px solid #dddbda;border-radius:5px;box-sizing:border-box"></div>
<svg class="r" style="left:2474.0px;top:554.0px;" width="19" height="12" viewBox="0 0 19 12"><path d="M1 1 L18 1 L9.5 11 Z" fill="#706e6b"/></svg>
<svg class="r" style="left:1762.5px;top:549.5px;" width="39" height="39" viewBox="0 0 39 39"><rect width="39" height="39" rx="5" fill="#5fc35f"/><path d="M9.8 7.5 L24 7.5 L29.4 13 L29.4 30.7 L9.8 30.7 Z" fill="#fff"/><path d="M23.2 7.5 L23.2 13.8 L29.4 13.8" fill="none" stroke="#5fc35f" stroke-width="1.6"/><rect x="13.5" y="19.4" width="12.1" height="2.1" fill="#5fc35f"/><rect x="13.5" y="24.1" width="12.1" height="2.1" fill="#5fc35f"/><path d="M15.6 11.2 L16.3 12.8 L18 12.9 L16.7 14 L17.1 15.6 L15.6 14.7 L14.1 15.6 L14.5 14 L13.2 12.9 L14.9 12.8 Z" fill="#5fc35f"/></svg>
<div class="t" style="left:1820.0px;top:556.5px;font-size:23.5px;color:#080707;font-weight:700;">Award (0)</div>
<div class="r" style="left:1741.0px;top:622.5px;width:778.0px;height:379.5px;background:#fff;border:2px solid #dddbda;border-top:5px solid #a8a8a8;border-radius:5px;box-sizing:border-box"></div>
<div class="r" style="left:2467.0px;top:641.0px;width:32.5px;height:31.5px;background:#fff;border:2px solid #dddbda;border-radius:5px;box-sizing:border-box"></div>
<svg class="r" style="left:2474.0px;top:651.0px;" width="19" height="12" viewBox="0 0 19 12"><path d="M1 1 L18 1 L9.5 11 Z" fill="#706e6b"/></svg>
<svg class="r" style="left:1762.5px;top:646.5px;" width="39" height="39" viewBox="0 0 39 39"><rect width="39" height="39" rx="5" fill="#f06a78"/><circle cx="18.9" cy="10.9" r="3.3" fill="#fff"/><path d="M12.1 22.8 C12.1 17 15 15.2 18.9 15.2 C22.8 15.2 25.9 17 25.9 22.8 Z" fill="#fff"/><path d="M18 16 L19.8 16 L19.4 21 L18.4 21 Z" fill="#f06a78"/><path d="M8.6 24.6 L30.3 24.6 L29 27.2 L26.5 27.2 L26.5 31 L12.4 31 L12.4 27.2 L9.9 27.2 Z" fill="#fff"/></svg>
<div class="t" style="left:1820.0px;top:654.4px;font-size:22.9px;color:#080707;font-weight:700;">Project Activities (2)</div>
<div class="t" style="left:1762.0px;top:709.6px;font-size:23.1px;color:#006dcc;">Water Line Repair</div>
<div class="ul" style="left:1762px;top:733.7px;width:186px"></div>
<div class="r" style="left:2467.0px;top:710.2px;width:32.5px;height:31.5px;background:#fff;border:2px solid #dddbda;border-radius:5px;box-sizing:border-box"></div>
<svg class="r" style="left:2474.0px;top:720.2px;" width="19" height="12" viewBox="0 0 19 12"><path d="M1 1 L18 1 L9.5 11 Z" fill="#706e6b"/></svg>
<div class="t" style="left:1762.0px;top:739.6px;font-size:21.2px;color:#080707;">From:</div>
<div class="t" style="left:1971.0px;top:739.3px;font-size:21.5px;color:#080707;letter-spacing:2.20px;">9/1/2019</div>
<div class="t" style="left:1762.0px;top:766.0px;font-size:21.2px;color:#080707;">On:</div>
<div class="t" style="left:1971.0px;top:765.7px;font-size:21.5px;color:#080707;letter-spacing:2.08px;">11/18/2019</div>
<div class="t" style="left:1762.0px;top:792.4px;font-size:21.2px;color:#080707;">To:</div>
<div class="t" style="left:1971.0px;top:792.1px;font-size:21.5px;color:#080707;letter-spacing:2.22px;">11/1/2019</div>
<div class="t" style="left:1762.0px;top:825.1px;font-size:23.1px;color:#006dcc;">Concrete Demolition</div>
<div class="ul" style="left:1762px;top:849.2px;width:219px"></div>
<div class="r" style="left:2467.0px;top:825.7px;width:32.5px;height:31.5px;background:#fff;border:2px solid #dddbda;border-radius:5px;box-sizing:border-box"></div>
<svg class="r" style="left:2474.0px;top:835.7px;" width="19" height="12" viewBox="0 0 19 12"><path d="M1 1 L18 1 L9.5 11 Z" fill="#706e6b"/></svg>
<div class="t" style="left:1762.0px;top:855.1px;font-size:21.2px;color:#080707;">From:</div>
<div class="t" style="left:1971.0px;top:854.8px;font-size:21.5px;color:#080707;letter-spacing:2.08px;">11/29/2019</div>
<div class="t" style="left:1762.0px;top:881.5px;font-size:21.2px;color:#080707;">On:</div>
<div class="t" style="left:1971.0px;top:881.2px;font-size:21.5px;color:#080707;letter-spacing:2.08px;">11/15/2019</div>
<div class="t" style="left:1762.0px;top:907.9px;font-size:21.2px;color:#080707;">To:</div>
<div class="t" style="left:1971.0px;top:907.6px;font-size:21.5px;color:#080707;letter-spacing:2.02px;">12/1/2019</div>
<div class="r" style="left:1743.0px;top:948.0px;width:774.0px;height:2.0px;background:#dddbda"></div>
<div class="t" style="left:2091.5px;top:964.7px;font-size:21.6px;color:#006dcc;">View All</div>
<div class="r" style="left:1741.0px;top:1017.0px;width:778.0px;height:327.0px;background:#fff;border:2px solid #dddbda;border-top:5px solid #a8a8a8;border-radius:5px;box-sizing:border-box"></div>
<div class="r" style="left:2467.0px;top:1034.0px;width:32.5px;height:31.5px;background:#fff;border:2px solid #dddbda;border-radius:5px;box-sizing:border-box"></div>
<svg class="r" style="left:2474.0px;top:1044.0px;" width="19" height="12" viewBox="0 0 19 12"><path d="M1 1 L18 1 L9.5 11 Z" fill="#706e6b"/></svg>
<svg class="r" style="left:1762.5px;top:1041.0px;" width="39" height="39" viewBox="0 0 39 39"><rect width="39" height="39" rx="5" fill="#fbae4c"/><g fill="#fff"><circle cx="9.2" cy="13.4" r="2.4"/><circle cx="19.7" cy="10.4" r="2.4"/><circle cx="29.8" cy="13.4" r="2.4"/><path d="M9.8 14.5 L14.5 19.5 L19.7 12 L24.9 19.5 L29.4 14.5 L28.3 24.3 L11 24.3 Z"/><rect x="11" y="27" width="17.5" height="3"/></g></svg>
<div class="t" style="left:1821.0px;top:1047.7px;font-size:23px;color:#080707;font-weight:700;">Project Funds (2)</div>
<div class="t" style="left:1762.0px;top:1104.4px;font-size:23.1px;color:#006dcc;letter-spacing:0.30px;">Fund-0037</div>
<div class="ul" style="left:1762px;top:1128.5px;width:116px"></div>
<div class="r" style="left:2467.0px;top:1105.0px;width:32.5px;height:31.5px;background:#fff;border:2px solid #dddbda;border-radius:5px;box-sizing:border-box"></div>
<svg class="r" style="left:2474.0px;top:1115.0px;" width="19" height="12" viewBox="0 0 19 12"><path d="M1 1 L18 1 L9.5 11 Z" fill="#706e6b"/></svg>
<div class="t" style="left:1762.0px;top:1134.6px;font-size:21.2px;color:#080707;">Amount:</div>
<div class="t" style="left:1971.0px;top:1134.3px;font-size:21.5px;color:#080707;letter-spacing:0.58px;">$50,000.00</div>
<div class="t" style="left:1762.0px;top:1160.8px;font-size:21.2px;color:#080707;">Source of Funds:</div>
<div class="t" style="left:1971.0px;top:1160.5px;font-size:21.5px;color:#080707;">State</div>
<div class="t" style="left:1762.0px;top:1192.9px;font-size:23.1px;color:#006dcc;letter-spacing:0.30px;">Fund-0038</div>
<div class="ul" style="left:1762px;top:1217.0px;width:116px"></div>
<div class="r" style="left:2467.0px;top:1193.5px;width:32.5px;height:31.5px;background:#fff;border:2px solid #dddbda;border-radius:5px;box-sizing:border-box"></div>
<svg class="r" style="left:2474.0px;top:1203.5px;" width="19" height="12" viewBox="0 0 19 12"><path d="M1 1 L18 1 L9.5 11 Z" fill="#706e6b"/></svg>
<div class="t" style="left:1762.0px;top:1223.1px;font-size:21.2px;color:#080707;">Amount:</div>
<div class="t" style="left:1971.0px;top:1222.8px;font-size:21.5px;color:#080707;letter-spacing:0.58px;">$20,000.00</div>
<div class="t" style="left:1762.0px;top:1249.3px;font-size:21.2px;color:#080707;">Source of Funds:</div>
<div class="t" style="left:1971.0px;top:1249.0px;font-size:21.5px;color:#080707;">Applicant</div>
<div class="r" style="left:1743.0px;top:1290.0px;width:774.0px;height:2.0px;background:#dddbda"></div>
<div class="t" style="left:2091.5px;top:1306.3px;font-size:21.6px;color:#006dcc;">View All</div>
<div class="r" style="left:1741.0px;top:1359.5px;width:778.0px;height:140.5px;background:#fff;border:2px solid #dddbda;border-top:5px solid #a8a8a8;border-radius:5px;box-sizing:border-box"></div>
<div class="r" style="left:2467.0px;top:1376.0px;width:32.5px;height:31.5px;background:#fff;border:2px solid #dddbda;border-radius:5px;box-sizing:border-box"></div>
<svg class="r" style="left:2474.0px;top:1386.0px;" width="19" height="12" viewBox="0 0 19 12"><path d="M1 1 L18 1 L9.5 11 Z" fill="#706e6b"/></svg>
<svg class="r" style="left:1762.5px;top:1383.0px;" width="39" height="39" viewBox="0 0 39 39"><rect width="39" height="39" rx="5" fill="#e0b953"/><rect x="7.1" y="11.4" width="14.7" height="13.2" fill="#fff"/><path d="M24.2 14.9 L29 14.9 L31.5 18.5 L31.5 24.6 L24.2 24.6 Z" fill="#fff"/><circle cx="12.5" cy="26.2" r="3.6" fill="#fff" stroke="#e0b953" stroke-width="1.6"/><circle cx="26.5" cy="26.2" r="3.6" fill="#fff" stroke="#e0b953" stroke-width="1.6"/></svg>
<div class="t" style="left:1821.0px;top:1390.1px;font-size:23.3px;color:#080707;font-weight:700;">Equipment (2)</div>
</body></html>
